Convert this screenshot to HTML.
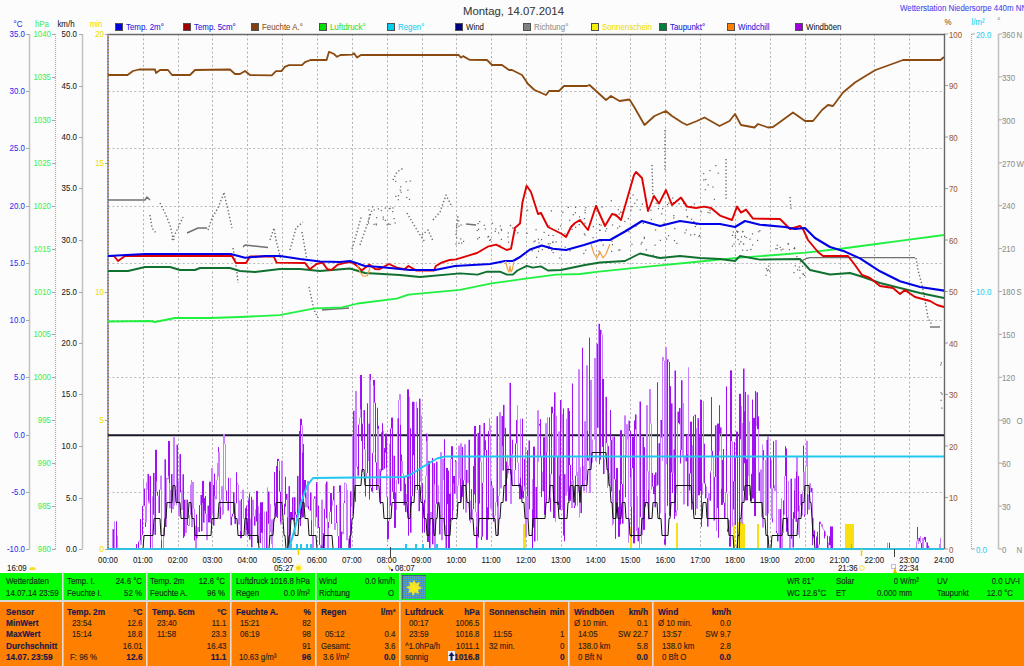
<!DOCTYPE html><html><head><meta charset="utf-8"><style>
html,body{margin:0;padding:0;background:#fcfcfc;}
body{width:1024px;height:666px;overflow:hidden;position:relative;font-family:"Liberation Sans",sans-serif;}
svg{position:absolute;left:0;top:0;}
text{font-family:"Liberation Sans",sans-serif;}
.h{stroke-width:0.08px;}
.t{stroke-width:0.15px;}
</style></head><body>
<svg width="1024" height="666" viewBox="0 0 1024 666">
<text x="513.50" y="14.6" font-size="11.35" fill="#383838" stroke="#383838" class="h" transform="matrix(1.0000,0,0,1,0.000,0)" text-anchor="middle">Montag, 14.07.2014</text>
<text x="900.00" y="11" font-size="8.53" fill="#4848f0" stroke="#4848f0" class="h" transform="matrix(0.9259,0,0,1,66.667,0)">Wetterstation Niedersorpe 440m NN</text>
<rect x="115.5" y="23.5" width="7" height="7" fill="#0000e0" stroke="#505050" stroke-width="1"/>
<text x="126.00" y="29.8" font-size="9.48" fill="#2020e0" stroke="#2020e0" class="h" transform="matrix(0.8333,0,0,1,21.000,0)">Temp. 2m°</text>
<rect x="183.5" y="23.5" width="7" height="7" fill="#a00000" stroke="#505050" stroke-width="1"/>
<text x="194.00" y="29.8" font-size="9.48" fill="#2020e0" stroke="#2020e0" class="h" transform="matrix(0.8333,0,0,1,32.333,0)">Temp. 5cm°</text>
<rect x="251.5" y="23.5" width="7" height="7" fill="#804010" stroke="#505050" stroke-width="1"/>
<text x="262.00" y="29.8" font-size="9.48" fill="#905020" stroke="#905020" class="h" transform="matrix(0.8333,0,0,1,43.667,0)">Feuchte A.°</text>
<rect x="319.5" y="23.5" width="7" height="7" fill="#00e000" stroke="#505050" stroke-width="1"/>
<text x="330.00" y="29.8" font-size="9.48" fill="#30e030" stroke="#30e030" class="h" transform="matrix(0.8333,0,0,1,55.000,0)">Luftdruck°</text>
<rect x="387.5" y="23.5" width="7" height="7" fill="#00d0f0" stroke="#505050" stroke-width="1"/>
<text x="398.00" y="29.8" font-size="9.48" fill="#20d0f0" stroke="#20d0f0" class="h" transform="matrix(0.8333,0,0,1,66.333,0)">Regen°</text>
<rect x="455.5" y="23.5" width="7" height="7" fill="#000080" stroke="#505050" stroke-width="1"/>
<text x="466.00" y="29.8" font-size="9.48" fill="#202020" stroke="#202020" class="h" transform="matrix(0.8333,0,0,1,77.667,0)">Wind</text>
<rect x="523.5" y="23.5" width="7" height="7" fill="#808080" stroke="#505050" stroke-width="1"/>
<text x="534.00" y="29.8" font-size="9.48" fill="#909090" stroke="#909090" class="h" transform="matrix(0.8333,0,0,1,89.000,0)">Richtung°</text>
<rect x="591.5" y="23.5" width="7" height="7" fill="#f0f000" stroke="#505050" stroke-width="1"/>
<text x="602.00" y="29.8" font-size="9.48" fill="#f0e000" stroke="#f0e000" class="h" transform="matrix(0.8333,0,0,1,100.333,0)">Sonnenschein</text>
<rect x="659.5" y="23.5" width="7" height="7" fill="#008040" stroke="#505050" stroke-width="1"/>
<text x="670.00" y="29.8" font-size="9.48" fill="#2020e0" stroke="#2020e0" class="h" transform="matrix(0.8333,0,0,1,111.667,0)">Taupunkt°</text>
<rect x="727.5" y="23.5" width="7" height="7" fill="#ff8000" stroke="#505050" stroke-width="1"/>
<text x="738.00" y="29.8" font-size="9.48" fill="#2020e0" stroke="#2020e0" class="h" transform="matrix(0.8333,0,0,1,123.000,0)">Windchill</text>
<rect x="795.5" y="23.5" width="7" height="7" fill="#a000e0" stroke="#505050" stroke-width="1"/>
<text x="806.00" y="29.8" font-size="9.48" fill="#202020" stroke="#202020" class="h" transform="matrix(0.8333,0,0,1,134.333,0)">Windböen</text>
<text x="18.00" y="27" font-size="9.48" fill="#3030f0" stroke="#3030f0" class="h" transform="matrix(0.8333,0,0,1,3.000,0)" text-anchor="middle">°C</text>
<text x="42.00" y="27" font-size="9.48" fill="#40f060" stroke="#40f060" class="h" transform="matrix(0.8333,0,0,1,7.000,0)" text-anchor="middle">hPa</text>
<text x="66.00" y="27" font-size="9.48" fill="#202020" stroke="#202020" class="h" transform="matrix(0.8333,0,0,1,11.000,0)" text-anchor="middle">km/h</text>
<text x="96.00" y="27" font-size="9.48" fill="#f0e000" stroke="#f0e000" class="h" transform="matrix(0.8333,0,0,1,16.000,0)" text-anchor="middle">min</text>
<text x="948.00" y="25.3" font-size="9.48" fill="#905020" stroke="#905020" class="h" transform="matrix(0.8333,0,0,1,158.000,0)" text-anchor="middle">%</text>
<text x="978.00" y="25.3" font-size="9.48" fill="#20d0f0" stroke="#20d0f0" class="h" transform="matrix(0.8333,0,0,1,163.000,0)" text-anchor="middle">l/m²</text>
<text x="999.00" y="24" font-size="9.48" fill="#909090" stroke="#909090" class="h" transform="matrix(0.8333,0,0,1,166.500,0)" text-anchor="middle">°</text>
<line x1="29.5" y1="34.0" x2="29.5" y2="549.0" stroke="#c4c4c4" stroke-width="1.6"/>
<line x1="26" y1="34.5" x2="29.5" y2="34.5" stroke="#a8a8a8" stroke-width="1"/>
<text x="25.00" y="37.3" font-size="9.48" fill="#3030f0" stroke="#3030f0" class="h" transform="matrix(0.8333,0,0,1,4.167,0)" text-anchor="end">35.0</text>
<line x1="26" y1="91.5" x2="29.5" y2="91.5" stroke="#a8a8a8" stroke-width="1"/>
<text x="25.00" y="94.3" font-size="9.48" fill="#3030f0" stroke="#3030f0" class="h" transform="matrix(0.8333,0,0,1,4.167,0)" text-anchor="end">30.0</text>
<line x1="26" y1="148.5" x2="29.5" y2="148.5" stroke="#a8a8a8" stroke-width="1"/>
<text x="25.00" y="151.3" font-size="9.48" fill="#3030f0" stroke="#3030f0" class="h" transform="matrix(0.8333,0,0,1,4.167,0)" text-anchor="end">25.0</text>
<line x1="26" y1="206.5" x2="29.5" y2="206.5" stroke="#a8a8a8" stroke-width="1"/>
<text x="25.00" y="209.3" font-size="9.48" fill="#3030f0" stroke="#3030f0" class="h" transform="matrix(0.8333,0,0,1,4.167,0)" text-anchor="end">20.0</text>
<line x1="26" y1="263.5" x2="29.5" y2="263.5" stroke="#a8a8a8" stroke-width="1"/>
<text x="25.00" y="266.3" font-size="9.48" fill="#3030f0" stroke="#3030f0" class="h" transform="matrix(0.8333,0,0,1,4.167,0)" text-anchor="end">15.0</text>
<line x1="26" y1="320.5" x2="29.5" y2="320.5" stroke="#a8a8a8" stroke-width="1"/>
<text x="25.00" y="323.3" font-size="9.48" fill="#3030f0" stroke="#3030f0" class="h" transform="matrix(0.8333,0,0,1,4.167,0)" text-anchor="end">10.0</text>
<line x1="26" y1="377.5" x2="29.5" y2="377.5" stroke="#a8a8a8" stroke-width="1"/>
<text x="25.00" y="380.3" font-size="9.48" fill="#3030f0" stroke="#3030f0" class="h" transform="matrix(0.8333,0,0,1,4.167,0)" text-anchor="end">5.0</text>
<line x1="26" y1="435.5" x2="29.5" y2="435.5" stroke="#a8a8a8" stroke-width="1"/>
<text x="25.00" y="438.3" font-size="9.48" fill="#3030f0" stroke="#3030f0" class="h" transform="matrix(0.8333,0,0,1,4.167,0)" text-anchor="end">0.0</text>
<line x1="26" y1="492.5" x2="29.5" y2="492.5" stroke="#a8a8a8" stroke-width="1"/>
<text x="25.00" y="495.3" font-size="9.48" fill="#3030f0" stroke="#3030f0" class="h" transform="matrix(0.8333,0,0,1,4.167,0)" text-anchor="end">-5.0</text>
<line x1="26" y1="549.5" x2="29.5" y2="549.5" stroke="#a8a8a8" stroke-width="1"/>
<text x="25.00" y="552.3" font-size="9.48" fill="#3030f0" stroke="#3030f0" class="h" transform="matrix(0.8333,0,0,1,4.167,0)" text-anchor="end">-10.0</text>
<line x1="55.5" y1="34.0" x2="55.5" y2="549.0" stroke="#c0a090" stroke-width="1.2" stroke-dasharray="1 1"/>
<line x1="52" y1="34.5" x2="55.5" y2="34.5" stroke="#a8a8a8" stroke-width="1"/>
<text x="51.00" y="37.3" font-size="9.48" fill="#40f060" stroke="#40f060" class="h" transform="matrix(0.8333,0,0,1,8.500,0)" text-anchor="end">1040</text>
<line x1="52" y1="77.5" x2="55.5" y2="77.5" stroke="#a8a8a8" stroke-width="1"/>
<text x="51.00" y="80.3" font-size="9.48" fill="#40f060" stroke="#40f060" class="h" transform="matrix(0.8333,0,0,1,8.500,0)" text-anchor="end">1035</text>
<line x1="52" y1="120.5" x2="55.5" y2="120.5" stroke="#a8a8a8" stroke-width="1"/>
<text x="51.00" y="123.3" font-size="9.48" fill="#40f060" stroke="#40f060" class="h" transform="matrix(0.8333,0,0,1,8.500,0)" text-anchor="end">1030</text>
<line x1="52" y1="163.5" x2="55.5" y2="163.5" stroke="#a8a8a8" stroke-width="1"/>
<text x="51.00" y="166.3" font-size="9.48" fill="#40f060" stroke="#40f060" class="h" transform="matrix(0.8333,0,0,1,8.500,0)" text-anchor="end">1025</text>
<line x1="52" y1="206.5" x2="55.5" y2="206.5" stroke="#a8a8a8" stroke-width="1"/>
<text x="51.00" y="209.3" font-size="9.48" fill="#40f060" stroke="#40f060" class="h" transform="matrix(0.8333,0,0,1,8.500,0)" text-anchor="end">1020</text>
<line x1="52" y1="249.5" x2="55.5" y2="249.5" stroke="#a8a8a8" stroke-width="1"/>
<text x="51.00" y="252.3" font-size="9.48" fill="#40f060" stroke="#40f060" class="h" transform="matrix(0.8333,0,0,1,8.500,0)" text-anchor="end">1015</text>
<line x1="52" y1="292.5" x2="55.5" y2="292.5" stroke="#a8a8a8" stroke-width="1"/>
<text x="51.00" y="295.3" font-size="9.48" fill="#40f060" stroke="#40f060" class="h" transform="matrix(0.8333,0,0,1,8.500,0)" text-anchor="end">1010</text>
<line x1="52" y1="334.5" x2="55.5" y2="334.5" stroke="#a8a8a8" stroke-width="1"/>
<text x="51.00" y="337.3" font-size="9.48" fill="#40f060" stroke="#40f060" class="h" transform="matrix(0.8333,0,0,1,8.500,0)" text-anchor="end">1005</text>
<line x1="52" y1="377.5" x2="55.5" y2="377.5" stroke="#a8a8a8" stroke-width="1"/>
<text x="51.00" y="380.3" font-size="9.48" fill="#40f060" stroke="#40f060" class="h" transform="matrix(0.8333,0,0,1,8.500,0)" text-anchor="end">1000</text>
<line x1="52" y1="420.5" x2="55.5" y2="420.5" stroke="#a8a8a8" stroke-width="1"/>
<text x="51.00" y="423.3" font-size="9.48" fill="#40f060" stroke="#40f060" class="h" transform="matrix(0.8333,0,0,1,8.500,0)" text-anchor="end">995</text>
<line x1="52" y1="463.5" x2="55.5" y2="463.5" stroke="#a8a8a8" stroke-width="1"/>
<text x="51.00" y="466.3" font-size="9.48" fill="#40f060" stroke="#40f060" class="h" transform="matrix(0.8333,0,0,1,8.500,0)" text-anchor="end">990</text>
<line x1="52" y1="506.5" x2="55.5" y2="506.5" stroke="#a8a8a8" stroke-width="1"/>
<text x="51.00" y="509.3" font-size="9.48" fill="#40f060" stroke="#40f060" class="h" transform="matrix(0.8333,0,0,1,8.500,0)" text-anchor="end">985</text>
<line x1="52" y1="549.5" x2="55.5" y2="549.5" stroke="#a8a8a8" stroke-width="1"/>
<text x="51.00" y="552.3" font-size="9.48" fill="#40f060" stroke="#40f060" class="h" transform="matrix(0.8333,0,0,1,8.500,0)" text-anchor="end">980</text>
<line x1="82.5" y1="34.0" x2="82.5" y2="549.0" stroke="#c4c4c4" stroke-width="1.6"/>
<line x1="79" y1="34.5" x2="82.5" y2="34.5" stroke="#a8a8a8" stroke-width="1"/>
<text x="77.00" y="37.3" font-size="9.48" fill="#202020" stroke="#202020" class="h" transform="matrix(0.8333,0,0,1,12.833,0)" text-anchor="end">50.0</text>
<line x1="79" y1="86.5" x2="82.5" y2="86.5" stroke="#a8a8a8" stroke-width="1"/>
<text x="77.00" y="89.3" font-size="9.48" fill="#202020" stroke="#202020" class="h" transform="matrix(0.8333,0,0,1,12.833,0)" text-anchor="end">45.0</text>
<line x1="79" y1="137.5" x2="82.5" y2="137.5" stroke="#a8a8a8" stroke-width="1"/>
<text x="77.00" y="140.3" font-size="9.48" fill="#202020" stroke="#202020" class="h" transform="matrix(0.8333,0,0,1,12.833,0)" text-anchor="end">40.0</text>
<line x1="79" y1="188.5" x2="82.5" y2="188.5" stroke="#a8a8a8" stroke-width="1"/>
<text x="77.00" y="191.3" font-size="9.48" fill="#202020" stroke="#202020" class="h" transform="matrix(0.8333,0,0,1,12.833,0)" text-anchor="end">35.0</text>
<line x1="79" y1="240.5" x2="82.5" y2="240.5" stroke="#a8a8a8" stroke-width="1"/>
<text x="77.00" y="243.3" font-size="9.48" fill="#202020" stroke="#202020" class="h" transform="matrix(0.8333,0,0,1,12.833,0)" text-anchor="end">30.0</text>
<line x1="79" y1="292.5" x2="82.5" y2="292.5" stroke="#a8a8a8" stroke-width="1"/>
<text x="77.00" y="295.3" font-size="9.48" fill="#202020" stroke="#202020" class="h" transform="matrix(0.8333,0,0,1,12.833,0)" text-anchor="end">25.0</text>
<line x1="79" y1="343.5" x2="82.5" y2="343.5" stroke="#a8a8a8" stroke-width="1"/>
<text x="77.00" y="346.3" font-size="9.48" fill="#202020" stroke="#202020" class="h" transform="matrix(0.8333,0,0,1,12.833,0)" text-anchor="end">20.0</text>
<line x1="79" y1="394.5" x2="82.5" y2="394.5" stroke="#a8a8a8" stroke-width="1"/>
<text x="77.00" y="397.3" font-size="9.48" fill="#202020" stroke="#202020" class="h" transform="matrix(0.8333,0,0,1,12.833,0)" text-anchor="end">15.0</text>
<line x1="79" y1="446.5" x2="82.5" y2="446.5" stroke="#a8a8a8" stroke-width="1"/>
<text x="77.00" y="449.3" font-size="9.48" fill="#202020" stroke="#202020" class="h" transform="matrix(0.8333,0,0,1,12.833,0)" text-anchor="end">10.0</text>
<line x1="79" y1="498.5" x2="82.5" y2="498.5" stroke="#a8a8a8" stroke-width="1"/>
<text x="77.00" y="501.3" font-size="9.48" fill="#202020" stroke="#202020" class="h" transform="matrix(0.8333,0,0,1,12.833,0)" text-anchor="end">5.0</text>
<line x1="79" y1="549.5" x2="82.5" y2="549.5" stroke="#a8a8a8" stroke-width="1"/>
<text x="77.00" y="552.3" font-size="9.48" fill="#202020" stroke="#202020" class="h" transform="matrix(0.8333,0,0,1,12.833,0)" text-anchor="end">0.0</text>
<line x1="105" y1="34.5" x2="108.5" y2="34.5" stroke="#a8a8a8" stroke-width="1"/>
<text x="104.00" y="37.3" font-size="9.48" fill="#f0e000" stroke="#f0e000" class="h" transform="matrix(0.8333,0,0,1,17.333,0)" text-anchor="end">20</text>
<line x1="105" y1="163.5" x2="108.5" y2="163.5" stroke="#a8a8a8" stroke-width="1"/>
<text x="104.00" y="166.3" font-size="9.48" fill="#f0e000" stroke="#f0e000" class="h" transform="matrix(0.8333,0,0,1,17.333,0)" text-anchor="end">15</text>
<line x1="105" y1="292.5" x2="108.5" y2="292.5" stroke="#a8a8a8" stroke-width="1"/>
<text x="104.00" y="295.3" font-size="9.48" fill="#f0e000" stroke="#f0e000" class="h" transform="matrix(0.8333,0,0,1,17.333,0)" text-anchor="end">10</text>
<line x1="105" y1="420.5" x2="108.5" y2="420.5" stroke="#a8a8a8" stroke-width="1"/>
<text x="104.00" y="423.3" font-size="9.48" fill="#f0e000" stroke="#f0e000" class="h" transform="matrix(0.8333,0,0,1,17.333,0)" text-anchor="end">5</text>
<line x1="105" y1="549.5" x2="108.5" y2="549.5" stroke="#a8a8a8" stroke-width="1"/>
<text x="104.00" y="552.3" font-size="9.48" fill="#f0e000" stroke="#f0e000" class="h" transform="matrix(0.8333,0,0,1,17.333,0)" text-anchor="end">0</text>
<line x1="971.5" y1="34.0" x2="971.5" y2="549.0" stroke="#c0a090" stroke-width="1.2" stroke-dasharray="1 1"/>
<line x1="998.5" y1="34.0" x2="998.5" y2="549.0" stroke="#c4c4c4" stroke-width="1.6"/>
<line x1="944" y1="34.0" x2="948" y2="34.0" stroke="#a0a0a0" stroke-width="1"/>
<text x="949.00" y="37.8" font-size="9.48" fill="#a06030" stroke="#a06030" class="h" transform="matrix(0.8333,0,0,1,158.167,0)">100</text>
<line x1="944" y1="85.5" x2="948" y2="85.5" stroke="#a0a0a0" stroke-width="1"/>
<text x="949.00" y="89.3" font-size="9.48" fill="#a06030" stroke="#a06030" class="h" transform="matrix(0.8333,0,0,1,158.167,0)">90</text>
<line x1="944" y1="137.0" x2="948" y2="137.0" stroke="#a0a0a0" stroke-width="1"/>
<text x="949.00" y="140.8" font-size="9.48" fill="#a06030" stroke="#a06030" class="h" transform="matrix(0.8333,0,0,1,158.167,0)">80</text>
<line x1="944" y1="188.5" x2="948" y2="188.5" stroke="#a0a0a0" stroke-width="1"/>
<text x="949.00" y="192.3" font-size="9.48" fill="#a06030" stroke="#a06030" class="h" transform="matrix(0.8333,0,0,1,158.167,0)">70</text>
<line x1="944" y1="240.0" x2="948" y2="240.0" stroke="#a0a0a0" stroke-width="1"/>
<text x="949.00" y="243.8" font-size="9.48" fill="#a06030" stroke="#a06030" class="h" transform="matrix(0.8333,0,0,1,158.167,0)">60</text>
<line x1="944" y1="291.5" x2="948" y2="291.5" stroke="#a0a0a0" stroke-width="1"/>
<text x="949.00" y="295.3" font-size="9.48" fill="#a06030" stroke="#a06030" class="h" transform="matrix(0.8333,0,0,1,158.167,0)">50</text>
<line x1="944" y1="343.0" x2="948" y2="343.0" stroke="#a0a0a0" stroke-width="1"/>
<text x="949.00" y="346.8" font-size="9.48" fill="#a06030" stroke="#a06030" class="h" transform="matrix(0.8333,0,0,1,158.167,0)">40</text>
<line x1="944" y1="394.5" x2="948" y2="394.5" stroke="#a0a0a0" stroke-width="1"/>
<text x="949.00" y="398.3" font-size="9.48" fill="#a06030" stroke="#a06030" class="h" transform="matrix(0.8333,0,0,1,158.167,0)">30</text>
<line x1="944" y1="446.0" x2="948" y2="446.0" stroke="#a0a0a0" stroke-width="1"/>
<text x="949.00" y="449.8" font-size="9.48" fill="#a06030" stroke="#a06030" class="h" transform="matrix(0.8333,0,0,1,158.167,0)">20</text>
<line x1="944" y1="497.5" x2="948" y2="497.5" stroke="#a0a0a0" stroke-width="1"/>
<text x="949.00" y="501.3" font-size="9.48" fill="#a06030" stroke="#a06030" class="h" transform="matrix(0.8333,0,0,1,158.167,0)">10</text>
<line x1="944" y1="549.0" x2="948" y2="549.0" stroke="#a0a0a0" stroke-width="1"/>
<text x="949.00" y="552.8" font-size="9.48" fill="#a06030" stroke="#a06030" class="h" transform="matrix(0.8333,0,0,1,158.167,0)">0</text>
<line x1="971.5" y1="34.0" x2="975" y2="34.0" stroke="#a8a8a8" stroke-width="1"/>
<text x="976.00" y="37.8" font-size="9.48" fill="#30d0f0" stroke="#30d0f0" class="h" transform="matrix(0.8333,0,0,1,162.667,0)">20.0</text>
<line x1="971.5" y1="291.5" x2="975" y2="291.5" stroke="#a8a8a8" stroke-width="1"/>
<text x="976.00" y="295.3" font-size="9.48" fill="#30d0f0" stroke="#30d0f0" class="h" transform="matrix(0.8333,0,0,1,162.667,0)">10.0</text>
<line x1="971.5" y1="549.0" x2="975" y2="549.0" stroke="#a8a8a8" stroke-width="1"/>
<text x="976.00" y="552.8" font-size="9.48" fill="#30d0f0" stroke="#30d0f0" class="h" transform="matrix(0.8333,0,0,1,162.667,0)">0.0</text>
<line x1="998.5" y1="34.0" x2="1002" y2="34.0" stroke="#a8a8a8" stroke-width="1"/>
<text x="1002.00" y="37.8" font-size="9.48" fill="#909090" stroke="#909090" class="h" transform="matrix(0.8333,0,0,1,167.000,0)">360</text>
<text x="1016.50" y="37.8" font-size="9.48" fill="#909090" stroke="#909090" class="h" transform="matrix(0.8333,0,0,1,169.417,0)">N</text>
<line x1="998.5" y1="76.9" x2="1002" y2="76.9" stroke="#a8a8a8" stroke-width="1"/>
<text x="1002.00" y="80.7" font-size="9.48" fill="#909090" stroke="#909090" class="h" transform="matrix(0.8333,0,0,1,167.000,0)">330</text>
<line x1="998.5" y1="119.8" x2="1002" y2="119.8" stroke="#a8a8a8" stroke-width="1"/>
<text x="1002.00" y="123.6" font-size="9.48" fill="#909090" stroke="#909090" class="h" transform="matrix(0.8333,0,0,1,167.000,0)">300</text>
<line x1="998.5" y1="162.8" x2="1002" y2="162.8" stroke="#a8a8a8" stroke-width="1"/>
<text x="1002.00" y="166.6" font-size="9.48" fill="#909090" stroke="#909090" class="h" transform="matrix(0.8333,0,0,1,167.000,0)">270</text>
<text x="1016.50" y="166.6" font-size="9.48" fill="#909090" stroke="#909090" class="h" transform="matrix(0.8333,0,0,1,169.417,0)">W</text>
<line x1="998.5" y1="205.7" x2="1002" y2="205.7" stroke="#a8a8a8" stroke-width="1"/>
<text x="1002.00" y="209.5" font-size="9.48" fill="#909090" stroke="#909090" class="h" transform="matrix(0.8333,0,0,1,167.000,0)">240</text>
<line x1="998.5" y1="248.6" x2="1002" y2="248.6" stroke="#a8a8a8" stroke-width="1"/>
<text x="1002.00" y="252.4" font-size="9.48" fill="#909090" stroke="#909090" class="h" transform="matrix(0.8333,0,0,1,167.000,0)">210</text>
<line x1="998.5" y1="291.5" x2="1002" y2="291.5" stroke="#a8a8a8" stroke-width="1"/>
<text x="1002.00" y="295.3" font-size="9.48" fill="#909090" stroke="#909090" class="h" transform="matrix(0.8333,0,0,1,167.000,0)">180</text>
<text x="1016.50" y="295.3" font-size="9.48" fill="#909090" stroke="#909090" class="h" transform="matrix(0.8333,0,0,1,169.417,0)">S</text>
<line x1="998.5" y1="334.4" x2="1002" y2="334.4" stroke="#a8a8a8" stroke-width="1"/>
<text x="1002.00" y="338.2" font-size="9.48" fill="#909090" stroke="#909090" class="h" transform="matrix(0.8333,0,0,1,167.000,0)">150</text>
<line x1="998.5" y1="377.3" x2="1002" y2="377.3" stroke="#a8a8a8" stroke-width="1"/>
<text x="1002.00" y="381.1" font-size="9.48" fill="#909090" stroke="#909090" class="h" transform="matrix(0.8333,0,0,1,167.000,0)">120</text>
<line x1="998.5" y1="420.2" x2="1002" y2="420.2" stroke="#a8a8a8" stroke-width="1"/>
<text x="1002.00" y="424.1" font-size="9.48" fill="#909090" stroke="#909090" class="h" transform="matrix(0.8333,0,0,1,167.000,0)">90</text>
<text x="1016.50" y="424.1" font-size="9.48" fill="#909090" stroke="#909090" class="h" transform="matrix(0.8333,0,0,1,169.417,0)">O</text>
<line x1="998.5" y1="463.2" x2="1002" y2="463.2" stroke="#a8a8a8" stroke-width="1"/>
<text x="1002.00" y="467.0" font-size="9.48" fill="#909090" stroke="#909090" class="h" transform="matrix(0.8333,0,0,1,167.000,0)">60</text>
<line x1="998.5" y1="506.1" x2="1002" y2="506.1" stroke="#a8a8a8" stroke-width="1"/>
<text x="1002.00" y="509.9" font-size="9.48" fill="#909090" stroke="#909090" class="h" transform="matrix(0.8333,0,0,1,167.000,0)">30</text>
<line x1="998.5" y1="549.0" x2="1002" y2="549.0" stroke="#a8a8a8" stroke-width="1"/>
<text x="1002.00" y="552.8" font-size="9.48" fill="#909090" stroke="#909090" class="h" transform="matrix(0.8333,0,0,1,167.000,0)">0</text>
<text x="1016.50" y="552.8" font-size="9.48" fill="#909090" stroke="#909090" class="h" transform="matrix(0.8333,0,0,1,169.417,0)">N</text>
<line x1="143.5" y1="34.0" x2="143.5" y2="549.0" stroke="#b0b0b0" stroke-width="1" stroke-dasharray="2 2.4"/>
<line x1="178.5" y1="34.0" x2="178.5" y2="549.0" stroke="#b0b0b0" stroke-width="1" stroke-dasharray="2 2.4"/>
<line x1="212.5" y1="34.0" x2="212.5" y2="549.0" stroke="#b0b0b0" stroke-width="1" stroke-dasharray="2 2.4"/>
<line x1="247.5" y1="34.0" x2="247.5" y2="549.0" stroke="#b0b0b0" stroke-width="1" stroke-dasharray="2 2.4"/>
<line x1="282.5" y1="34.0" x2="282.5" y2="549.0" stroke="#b0b0b0" stroke-width="1" stroke-dasharray="2 2.4"/>
<line x1="317.5" y1="34.0" x2="317.5" y2="549.0" stroke="#b0b0b0" stroke-width="1" stroke-dasharray="2 2.4"/>
<line x1="352.5" y1="34.0" x2="352.5" y2="549.0" stroke="#b0b0b0" stroke-width="1" stroke-dasharray="2 2.4"/>
<line x1="387.5" y1="34.0" x2="387.5" y2="549.0" stroke="#b0b0b0" stroke-width="1" stroke-dasharray="2 2.4"/>
<line x1="422.5" y1="34.0" x2="422.5" y2="549.0" stroke="#b0b0b0" stroke-width="1" stroke-dasharray="2 2.4"/>
<line x1="456.5" y1="34.0" x2="456.5" y2="549.0" stroke="#b0b0b0" stroke-width="1" stroke-dasharray="2 2.4"/>
<line x1="491.5" y1="34.0" x2="491.5" y2="549.0" stroke="#b0b0b0" stroke-width="1" stroke-dasharray="2 2.4"/>
<line x1="526.5" y1="34.0" x2="526.5" y2="549.0" stroke="#b0b0b0" stroke-width="1" stroke-dasharray="2 2.4"/>
<line x1="561.5" y1="34.0" x2="561.5" y2="549.0" stroke="#b0b0b0" stroke-width="1" stroke-dasharray="2 2.4"/>
<line x1="596.5" y1="34.0" x2="596.5" y2="549.0" stroke="#b0b0b0" stroke-width="1" stroke-dasharray="2 2.4"/>
<line x1="630.5" y1="34.0" x2="630.5" y2="549.0" stroke="#b0b0b0" stroke-width="1" stroke-dasharray="2 2.4"/>
<line x1="665.5" y1="34.0" x2="665.5" y2="549.0" stroke="#b0b0b0" stroke-width="1" stroke-dasharray="2 2.4"/>
<line x1="700.5" y1="34.0" x2="700.5" y2="549.0" stroke="#b0b0b0" stroke-width="1" stroke-dasharray="2 2.4"/>
<line x1="735.5" y1="34.0" x2="735.5" y2="549.0" stroke="#b0b0b0" stroke-width="1" stroke-dasharray="2 2.4"/>
<line x1="770.5" y1="34.0" x2="770.5" y2="549.0" stroke="#b0b0b0" stroke-width="1" stroke-dasharray="2 2.4"/>
<line x1="805.5" y1="34.0" x2="805.5" y2="549.0" stroke="#b0b0b0" stroke-width="1" stroke-dasharray="2 2.4"/>
<line x1="840.5" y1="34.0" x2="840.5" y2="549.0" stroke="#b0b0b0" stroke-width="1" stroke-dasharray="2 2.4"/>
<line x1="874.5" y1="34.0" x2="874.5" y2="549.0" stroke="#b0b0b0" stroke-width="1" stroke-dasharray="2 2.4"/>
<line x1="909.5" y1="34.0" x2="909.5" y2="549.0" stroke="#b0b0b0" stroke-width="1" stroke-dasharray="2 2.4"/>
<line x1="108.0" y1="91.5" x2="944.0" y2="91.5" stroke="#bababa" stroke-width="1" stroke-dasharray="2 2.4"/>
<line x1="108.0" y1="148.5" x2="944.0" y2="148.5" stroke="#bababa" stroke-width="1" stroke-dasharray="2 2.4"/>
<line x1="108.0" y1="206.5" x2="944.0" y2="206.5" stroke="#bababa" stroke-width="1" stroke-dasharray="2 2.4"/>
<line x1="108.0" y1="263.5" x2="944.0" y2="263.5" stroke="#bababa" stroke-width="1" stroke-dasharray="2 2.4"/>
<line x1="108.0" y1="320.5" x2="944.0" y2="320.5" stroke="#bababa" stroke-width="1" stroke-dasharray="2 2.4"/>
<line x1="108.0" y1="377.5" x2="944.0" y2="377.5" stroke="#bababa" stroke-width="1" stroke-dasharray="2 2.4"/>
<line x1="108.0" y1="435.5" x2="944.0" y2="435.5" stroke="#bababa" stroke-width="1" stroke-dasharray="2 2.4"/>
<line x1="108.0" y1="492.5" x2="944.0" y2="492.5" stroke="#bababa" stroke-width="1" stroke-dasharray="2 2.4"/>
<line x1="108.0" y1="34.5" x2="944.7" y2="34.5" stroke="#686868" stroke-width="1.4"/>
<line x1="944.5" y1="34.0" x2="944.5" y2="549.0" stroke="#686868" stroke-width="1.4"/>
<line x1="108.0" y1="34.0" x2="108.0" y2="549.0" stroke="#9c9cd8" stroke-width="2"/>
<line x1="108.0" y1="34.0" x2="108.0" y2="549.0" stroke="#b07840" stroke-width="2" stroke-dasharray="1 2"/>
<line x1="108.0" y1="34.0" x2="108.0" y2="549.0" stroke="#50b080" stroke-width="1" stroke-dasharray="1 5" stroke-dashoffset="2"/>
<text x="108.00" y="563" font-size="9.48" fill="#202020" stroke="#202020" class="h" transform="matrix(0.8333,0,0,1,18.000,0)" text-anchor="middle">00:00</text>
<text x="142.80" y="563" font-size="9.48" fill="#202020" stroke="#202020" class="h" transform="matrix(0.8333,0,0,1,23.800,0)" text-anchor="middle">01:00</text>
<text x="177.70" y="563" font-size="9.48" fill="#202020" stroke="#202020" class="h" transform="matrix(0.8333,0,0,1,29.617,0)" text-anchor="middle">02:00</text>
<text x="212.50" y="563" font-size="9.48" fill="#202020" stroke="#202020" class="h" transform="matrix(0.8333,0,0,1,35.417,0)" text-anchor="middle">03:00</text>
<text x="247.30" y="563" font-size="9.48" fill="#202020" stroke="#202020" class="h" transform="matrix(0.8333,0,0,1,41.217,0)" text-anchor="middle">04:00</text>
<text x="282.20" y="563" font-size="9.48" fill="#202020" stroke="#202020" class="h" transform="matrix(0.8333,0,0,1,47.033,0)" text-anchor="middle">05:00</text>
<text x="317.00" y="563" font-size="9.48" fill="#202020" stroke="#202020" class="h" transform="matrix(0.8333,0,0,1,52.833,0)" text-anchor="middle">06:00</text>
<text x="351.80" y="563" font-size="9.48" fill="#202020" stroke="#202020" class="h" transform="matrix(0.8333,0,0,1,58.633,0)" text-anchor="middle">07:00</text>
<text x="386.70" y="563" font-size="9.48" fill="#202020" stroke="#202020" class="h" transform="matrix(0.8333,0,0,1,64.450,0)" text-anchor="middle">08:00</text>
<text x="421.50" y="563" font-size="9.48" fill="#202020" stroke="#202020" class="h" transform="matrix(0.8333,0,0,1,70.250,0)" text-anchor="middle">09:00</text>
<text x="456.30" y="563" font-size="9.48" fill="#202020" stroke="#202020" class="h" transform="matrix(0.8333,0,0,1,76.050,0)" text-anchor="middle">10:00</text>
<text x="491.20" y="563" font-size="9.48" fill="#202020" stroke="#202020" class="h" transform="matrix(0.8333,0,0,1,81.867,0)" text-anchor="middle">11:00</text>
<text x="526.00" y="563" font-size="9.48" fill="#202020" stroke="#202020" class="h" transform="matrix(0.8333,0,0,1,87.667,0)" text-anchor="middle">12:00</text>
<text x="560.80" y="563" font-size="9.48" fill="#202020" stroke="#202020" class="h" transform="matrix(0.8333,0,0,1,93.467,0)" text-anchor="middle">13:00</text>
<text x="595.70" y="563" font-size="9.48" fill="#202020" stroke="#202020" class="h" transform="matrix(0.8333,0,0,1,99.283,0)" text-anchor="middle">14:00</text>
<text x="630.50" y="563" font-size="9.48" fill="#202020" stroke="#202020" class="h" transform="matrix(0.8333,0,0,1,105.083,0)" text-anchor="middle">15:00</text>
<text x="665.30" y="563" font-size="9.48" fill="#202020" stroke="#202020" class="h" transform="matrix(0.8333,0,0,1,110.883,0)" text-anchor="middle">16:00</text>
<text x="700.20" y="563" font-size="9.48" fill="#202020" stroke="#202020" class="h" transform="matrix(0.8333,0,0,1,116.700,0)" text-anchor="middle">17:00</text>
<text x="735.00" y="563" font-size="9.48" fill="#202020" stroke="#202020" class="h" transform="matrix(0.8333,0,0,1,122.500,0)" text-anchor="middle">18:00</text>
<text x="769.80" y="563" font-size="9.48" fill="#202020" stroke="#202020" class="h" transform="matrix(0.8333,0,0,1,128.300,0)" text-anchor="middle">19:00</text>
<text x="804.70" y="563" font-size="9.48" fill="#202020" stroke="#202020" class="h" transform="matrix(0.8333,0,0,1,134.117,0)" text-anchor="middle">20:00</text>
<text x="839.50" y="563" font-size="9.48" fill="#202020" stroke="#202020" class="h" transform="matrix(0.8333,0,0,1,139.917,0)" text-anchor="middle">21:00</text>
<text x="874.30" y="563" font-size="9.48" fill="#202020" stroke="#202020" class="h" transform="matrix(0.8333,0,0,1,145.717,0)" text-anchor="middle">22:00</text>
<text x="909.20" y="563" font-size="9.48" fill="#202020" stroke="#202020" class="h" transform="matrix(0.8333,0,0,1,151.533,0)" text-anchor="middle">23:00</text>
<text x="944.00" y="563" font-size="9.48" fill="#202020" stroke="#202020" class="h" transform="matrix(0.8333,0,0,1,157.333,0)" text-anchor="middle">24:00</text>
<polyline points="150.0,215.0 152.0,228.0 156.0,233.0" fill="none" stroke="#686868" stroke-width="1.4" stroke-linejoin="round" stroke-dasharray="1.3 2.2" stroke-linejoin="miter"/>
<polyline points="160.0,203.0 165.0,213.0 170.0,225.0 173.0,238.0 175.0,242.0" fill="none" stroke="#686868" stroke-width="1.4" stroke-linejoin="round" stroke-dasharray="1.3 2.2" stroke-linejoin="miter"/>
<polyline points="172.0,240.0 178.0,228.0 183.0,217.0" fill="none" stroke="#686868" stroke-width="1.4" stroke-linejoin="round" stroke-dasharray="1.3 2.2" stroke-linejoin="miter"/>
<polyline points="208.0,230.0 212.0,218.0 218.0,208.0 224.0,193.0" fill="none" stroke="#686868" stroke-width="1.4" stroke-linejoin="round" stroke-dasharray="1.3 2.2" stroke-linejoin="miter"/>
<polyline points="224.0,193.0 228.0,210.0 232.0,228.0" fill="none" stroke="#686868" stroke-width="1.4" stroke-linejoin="round" stroke-dasharray="1.3 2.2" stroke-linejoin="miter"/>
<polyline points="233.0,248.0 236.0,265.0 238.0,283.0" fill="none" stroke="#686868" stroke-width="1.4" stroke-linejoin="round" stroke-dasharray="1.3 2.2" stroke-linejoin="miter"/>
<polyline points="270.0,240.0 274.0,228.0 276.0,240.0 281.0,260.0" fill="none" stroke="#686868" stroke-width="1.4" stroke-linejoin="round" stroke-dasharray="1.3 2.2" stroke-linejoin="miter"/>
<polyline points="290.0,250.0 296.0,228.0 303.0,222.0" fill="none" stroke="#686868" stroke-width="1.4" stroke-linejoin="round" stroke-dasharray="1.3 2.2" stroke-linejoin="miter"/>
<polyline points="302.0,232.0 307.0,260.0" fill="none" stroke="#686868" stroke-width="1.4" stroke-linejoin="round" stroke-dasharray="1.3 2.2" stroke-linejoin="miter"/>
<polyline points="309.0,287.0 314.0,310.0 318.0,318.0" fill="none" stroke="#686868" stroke-width="1.4" stroke-linejoin="round" stroke-dasharray="1.3 2.2" stroke-linejoin="miter"/>
<polyline points="352.0,249.0 357.0,232.0 361.5,216.0" fill="none" stroke="#686868" stroke-width="1.4" stroke-linejoin="round" stroke-dasharray="1.3 2.2" stroke-linejoin="miter"/>
<polyline points="360.0,245.0 366.0,228.0 372.0,210.0" fill="none" stroke="#686868" stroke-width="1.4" stroke-linejoin="round" stroke-dasharray="1.3 2.2" stroke-linejoin="miter"/>
<polyline points="393.0,180.0 397.0,172.0 403.6,168.0" fill="none" stroke="#686868" stroke-width="1.4" stroke-linejoin="round" stroke-dasharray="1.3 2.2" stroke-linejoin="miter"/>
<polyline points="407.0,213.0 414.0,225.0 420.0,235.0 425.0,242.0" fill="none" stroke="#686868" stroke-width="1.4" stroke-linejoin="round" stroke-dasharray="1.3 2.2" stroke-linejoin="miter"/>
<polyline points="422.0,235.0 428.0,230.0 433.0,241.0" fill="none" stroke="#686868" stroke-width="1.4" stroke-linejoin="round" stroke-dasharray="1.3 2.2" stroke-linejoin="miter"/>
<polyline points="433.0,220.0 440.0,212.0 446.0,195.0 452.0,207.0" fill="none" stroke="#686868" stroke-width="1.4" stroke-linejoin="round" stroke-dasharray="1.3 2.2" stroke-linejoin="miter"/>
<polyline points="456.0,235.0 458.0,215.0" fill="none" stroke="#686868" stroke-width="1.4" stroke-linejoin="round" stroke-dasharray="1.3 2.2" stroke-linejoin="miter"/>
<polyline points="510.0,225.0 520.0,235.0" fill="none" stroke="#686868" stroke-width="1.4" stroke-linejoin="round" stroke-dasharray="1.3 2.2" stroke-linejoin="miter"/>
<polyline points="726.0,159.0 726.0,200.0" fill="none" stroke="#686868" stroke-width="1.4" stroke-linejoin="round" stroke-dasharray="1.3 2.2" stroke-linejoin="miter"/>
<polyline points="665.0,130.0 665.0,171.0" fill="none" stroke="#686868" stroke-width="1.4" stroke-linejoin="round" stroke-dasharray="1.3 2.2" stroke-linejoin="miter"/>
<polyline points="652.0,165.0 653.0,200.0" fill="none" stroke="#686868" stroke-width="1.4" stroke-linejoin="round" stroke-dasharray="1.3 2.2" stroke-linejoin="miter"/>
<polyline points="790.0,197.0 791.0,210.0" fill="none" stroke="#686868" stroke-width="1.4" stroke-linejoin="round" stroke-dasharray="1.3 2.2" stroke-linejoin="miter"/>
<polyline points="732.0,235.0 745.0,245.0" fill="none" stroke="#686868" stroke-width="1.4" stroke-linejoin="round" stroke-dasharray="1.3 2.2" stroke-linejoin="miter"/>
<polyline points="916.0,258.0 918.0,270.0 922.0,285.0 925.0,300.0 928.0,318.0 932.0,325.0" fill="none" stroke="#686868" stroke-width="1.4" stroke-linejoin="round" stroke-dasharray="1.3 2.2" stroke-linejoin="miter"/>
<polyline points="108.0,200.0 145.0,200.0 147.0,197.0 150.0,200.0" fill="none" stroke="#707070" stroke-width="1.4" stroke-linejoin="round"/>
<polyline points="187.0,233.0 198.0,228.0 207.0,228.0" fill="none" stroke="#707070" stroke-width="1.4" stroke-linejoin="round"/>
<polyline points="243.0,247.0 245.0,245.0 268.0,247.5" fill="none" stroke="#707070" stroke-width="1.4" stroke-linejoin="round"/>
<polyline points="322.0,310.0 349.0,308.0" fill="none" stroke="#707070" stroke-width="1.4" stroke-linejoin="round"/>
<polyline points="466.0,224.0 476.0,225.0" fill="none" stroke="#707070" stroke-width="1.4" stroke-linejoin="round"/>
<polyline points="800.0,262.0 806.0,258.5 810.0,257.6 915.0,257.6" fill="none" stroke="#707070" stroke-width="1.4" stroke-linejoin="round"/>
<polyline points="930.0,327.0 940.0,327.0" fill="none" stroke="#707070" stroke-width="1.4" stroke-linejoin="round"/>
<g fill="#606060"><rect x="384.8" y="219.8" width="1.2" height="1.2"/><rect x="389.5" y="223.8" width="1.2" height="1.2"/><rect x="388.0" y="223.4" width="1.2" height="1.2"/><rect x="368.8" y="214.3" width="1.2" height="1.2"/><rect x="393.5" y="218.0" width="1.2" height="1.2"/><rect x="392.3" y="207.3" width="1.2" height="1.2"/><rect x="380.7" y="209.9" width="1.2" height="1.2"/><rect x="382.7" y="216.5" width="1.2" height="1.2"/><rect x="368.4" y="209.3" width="1.2" height="1.2"/><rect x="375.5" y="223.3" width="1.2" height="1.2"/><rect x="388.7" y="208.2" width="1.2" height="1.2"/><rect x="389.5" y="207.8" width="1.2" height="1.2"/><rect x="384.7" y="207.5" width="1.2" height="1.2"/><rect x="368.0" y="222.4" width="1.2" height="1.2"/><rect x="373.7" y="209.3" width="1.2" height="1.2"/><rect x="394.5" y="222.4" width="1.2" height="1.2"/><rect x="375.8" y="224.2" width="1.2" height="1.2"/><rect x="382.6" y="218.6" width="1.2" height="1.2"/><rect x="373.5" y="223.8" width="1.2" height="1.2"/><rect x="386.6" y="224.3" width="1.2" height="1.2"/><rect x="392.1" y="211.0" width="1.2" height="1.2"/><rect x="377.8" y="208.3" width="1.2" height="1.2"/><rect x="371.9" y="206.3" width="1.2" height="1.2"/><rect x="376.1" y="217.1" width="1.2" height="1.2"/><rect x="368.1" y="218.6" width="1.2" height="1.2"/><rect x="400.1" y="186.2" width="1.2" height="1.2"/><rect x="407.3" y="189.6" width="1.2" height="1.2"/><rect x="399.7" y="189.6" width="1.2" height="1.2"/><rect x="405.6" y="181.1" width="1.2" height="1.2"/><rect x="409.6" y="180.5" width="1.2" height="1.2"/><rect x="406.2" y="196.9" width="1.2" height="1.2"/><rect x="395.3" y="195.8" width="1.2" height="1.2"/><rect x="400.5" y="191.6" width="1.2" height="1.2"/><rect x="395.1" y="180.9" width="1.2" height="1.2"/><rect x="397.7" y="199.1" width="1.2" height="1.2"/><rect x="397.9" y="195.1" width="1.2" height="1.2"/><rect x="408.9" y="198.8" width="1.2" height="1.2"/><rect x="458.4" y="225.6" width="1.2" height="1.2"/><rect x="460.2" y="238.3" width="1.2" height="1.2"/><rect x="456.1" y="237.5" width="1.2" height="1.2"/><rect x="463.0" y="240.8" width="1.2" height="1.2"/><rect x="455.4" y="243.4" width="1.2" height="1.2"/><rect x="455.9" y="225.2" width="1.2" height="1.2"/><rect x="461.1" y="242.5" width="1.2" height="1.2"/><rect x="458.4" y="242.7" width="1.2" height="1.2"/><rect x="460.5" y="224.4" width="1.2" height="1.2"/><rect x="458.2" y="220.3" width="1.2" height="1.2"/><rect x="477.5" y="223.0" width="1.2" height="1.2"/><rect x="489.1" y="239.9" width="1.2" height="1.2"/><rect x="479.1" y="221.0" width="1.2" height="1.2"/><rect x="494.7" y="230.7" width="1.2" height="1.2"/><rect x="483.7" y="224.7" width="1.2" height="1.2"/><rect x="487.3" y="236.5" width="1.2" height="1.2"/><rect x="484.7" y="228.4" width="1.2" height="1.2"/><rect x="477.1" y="238.3" width="1.2" height="1.2"/><rect x="476.6" y="229.9" width="1.2" height="1.2"/><rect x="491.9" y="222.6" width="1.2" height="1.2"/><rect x="489.9" y="239.0" width="1.2" height="1.2"/><rect x="488.0" y="235.8" width="1.2" height="1.2"/><rect x="478.0" y="228.7" width="1.2" height="1.2"/><rect x="478.8" y="236.9" width="1.2" height="1.2"/><rect x="498.1" y="232.4" width="1.2" height="1.2"/><rect x="508.0" y="241.6" width="1.2" height="1.2"/><rect x="507.7" y="232.4" width="1.2" height="1.2"/><rect x="500.8" y="238.8" width="1.2" height="1.2"/><rect x="500.7" y="228.7" width="1.2" height="1.2"/><rect x="499.7" y="225.4" width="1.2" height="1.2"/><rect x="499.3" y="244.7" width="1.2" height="1.2"/><rect x="507.4" y="236.4" width="1.2" height="1.2"/><rect x="501.0" y="229.8" width="1.2" height="1.2"/><rect x="495.2" y="228.3" width="1.2" height="1.2"/><rect x="552.6" y="252.0" width="1.2" height="1.2"/><rect x="538.3" y="247.2" width="1.2" height="1.2"/><rect x="552.3" y="241.7" width="1.2" height="1.2"/><rect x="548.6" y="245.6" width="1.2" height="1.2"/><rect x="538.4" y="242.3" width="1.2" height="1.2"/><rect x="535.5" y="229.1" width="1.2" height="1.2"/><rect x="552.2" y="241.5" width="1.2" height="1.2"/><rect x="536.0" y="256.7" width="1.2" height="1.2"/><rect x="548.1" y="234.8" width="1.2" height="1.2"/><rect x="526.4" y="232.8" width="1.2" height="1.2"/><rect x="534.5" y="240.3" width="1.2" height="1.2"/><rect x="541.7" y="249.0" width="1.2" height="1.2"/><rect x="548.0" y="247.9" width="1.2" height="1.2"/><rect x="537.8" y="238.6" width="1.2" height="1.2"/><rect x="551.1" y="249.7" width="1.2" height="1.2"/><rect x="537.9" y="250.6" width="1.2" height="1.2"/><rect x="555.6" y="241.3" width="1.2" height="1.2"/><rect x="559.2" y="257.4" width="1.2" height="1.2"/><rect x="543.6" y="231.8" width="1.2" height="1.2"/><rect x="531.6" y="250.2" width="1.2" height="1.2"/><rect x="557.9" y="228.6" width="1.2" height="1.2"/><rect x="549.5" y="243.2" width="1.2" height="1.2"/><rect x="550.8" y="210.3" width="1.2" height="1.2"/><rect x="552.5" y="234.9" width="1.2" height="1.2"/><rect x="548.6" y="225.2" width="1.2" height="1.2"/><rect x="547.2" y="246.5" width="1.2" height="1.2"/><rect x="547.7" y="243.2" width="1.2" height="1.2"/><rect x="526.9" y="209.6" width="1.2" height="1.2"/><rect x="541.0" y="239.0" width="1.2" height="1.2"/><rect x="533.4" y="241.2" width="1.2" height="1.2"/><rect x="585.2" y="207.1" width="1.2" height="1.2"/><rect x="578.9" y="216.3" width="1.2" height="1.2"/><rect x="562.2" y="211.7" width="1.2" height="1.2"/><rect x="572.7" y="214.1" width="1.2" height="1.2"/><rect x="567.7" y="206.8" width="1.2" height="1.2"/><rect x="578.6" y="224.0" width="1.2" height="1.2"/><rect x="584.5" y="234.5" width="1.2" height="1.2"/><rect x="569.5" y="250.2" width="1.2" height="1.2"/><rect x="560.0" y="225.3" width="1.2" height="1.2"/><rect x="571.1" y="225.5" width="1.2" height="1.2"/><rect x="564.6" y="246.6" width="1.2" height="1.2"/><rect x="575.0" y="206.8" width="1.2" height="1.2"/><rect x="584.5" y="209.7" width="1.2" height="1.2"/><rect x="581.8" y="222.0" width="1.2" height="1.2"/><rect x="583.2" y="252.9" width="1.2" height="1.2"/><rect x="592.7" y="226.0" width="1.2" height="1.2"/><rect x="592.5" y="237.1" width="1.2" height="1.2"/><rect x="574.8" y="212.1" width="1.2" height="1.2"/><rect x="583.8" y="233.2" width="1.2" height="1.2"/><rect x="598.3" y="253.4" width="1.2" height="1.2"/><rect x="584.3" y="222.6" width="1.2" height="1.2"/><rect x="595.7" y="205.0" width="1.2" height="1.2"/><rect x="564.3" y="233.3" width="1.2" height="1.2"/><rect x="584.6" y="212.0" width="1.2" height="1.2"/><rect x="585.2" y="249.6" width="1.2" height="1.2"/><rect x="575.0" y="226.6" width="1.2" height="1.2"/><rect x="569.1" y="219.6" width="1.2" height="1.2"/><rect x="598.9" y="224.0" width="1.2" height="1.2"/><rect x="598.4" y="250.7" width="1.2" height="1.2"/><rect x="583.8" y="218.0" width="1.2" height="1.2"/><rect x="599.2" y="229.8" width="1.2" height="1.2"/><rect x="576.6" y="221.0" width="1.2" height="1.2"/><rect x="599.4" y="229.6" width="1.2" height="1.2"/><rect x="571.5" y="228.8" width="1.2" height="1.2"/><rect x="604.9" y="230.4" width="1.2" height="1.2"/><rect x="617.7" y="209.1" width="1.2" height="1.2"/><rect x="631.3" y="243.7" width="1.2" height="1.2"/><rect x="600.5" y="224.6" width="1.2" height="1.2"/><rect x="611.0" y="250.8" width="1.2" height="1.2"/><rect x="631.3" y="206.0" width="1.2" height="1.2"/><rect x="610.7" y="200.1" width="1.2" height="1.2"/><rect x="639.6" y="209.1" width="1.2" height="1.2"/><rect x="624.3" y="220.9" width="1.2" height="1.2"/><rect x="625.8" y="229.3" width="1.2" height="1.2"/><rect x="629.7" y="197.7" width="1.2" height="1.2"/><rect x="630.4" y="209.5" width="1.2" height="1.2"/><rect x="621.3" y="211.8" width="1.2" height="1.2"/><rect x="611.9" y="224.4" width="1.2" height="1.2"/><rect x="618.6" y="213.5" width="1.2" height="1.2"/><rect x="629.8" y="228.4" width="1.2" height="1.2"/><rect x="601.5" y="206.4" width="1.2" height="1.2"/><rect x="618.2" y="249.6" width="1.2" height="1.2"/><rect x="635.5" y="225.5" width="1.2" height="1.2"/><rect x="600.6" y="240.6" width="1.2" height="1.2"/><rect x="617.1" y="227.4" width="1.2" height="1.2"/><rect x="628.3" y="231.1" width="1.2" height="1.2"/><rect x="619.3" y="249.3" width="1.2" height="1.2"/><rect x="615.4" y="215.5" width="1.2" height="1.2"/><rect x="634.1" y="202.8" width="1.2" height="1.2"/><rect x="611.9" y="244.0" width="1.2" height="1.2"/><rect x="602.6" y="244.4" width="1.2" height="1.2"/><rect x="627.8" y="218.1" width="1.2" height="1.2"/><rect x="611.5" y="240.7" width="1.2" height="1.2"/><rect x="636.4" y="199.3" width="1.2" height="1.2"/><rect x="619.1" y="225.7" width="1.2" height="1.2"/><rect x="619.9" y="211.5" width="1.2" height="1.2"/><rect x="606.1" y="228.1" width="1.2" height="1.2"/><rect x="632.5" y="194.4" width="1.2" height="1.2"/><rect x="645.8" y="249.2" width="1.2" height="1.2"/><rect x="659.8" y="239.8" width="1.2" height="1.2"/><rect x="640.6" y="243.4" width="1.2" height="1.2"/><rect x="664.5" y="259.9" width="1.2" height="1.2"/><rect x="657.5" y="202.9" width="1.2" height="1.2"/><rect x="661.1" y="213.2" width="1.2" height="1.2"/><rect x="656.1" y="257.1" width="1.2" height="1.2"/><rect x="657.8" y="208.1" width="1.2" height="1.2"/><rect x="647.3" y="255.1" width="1.2" height="1.2"/><rect x="643.7" y="236.6" width="1.2" height="1.2"/><rect x="650.3" y="209.7" width="1.2" height="1.2"/><rect x="655.6" y="202.6" width="1.2" height="1.2"/><rect x="642.7" y="222.8" width="1.2" height="1.2"/><rect x="641.8" y="203.5" width="1.2" height="1.2"/><rect x="654.4" y="244.5" width="1.2" height="1.2"/><rect x="662.0" y="208.1" width="1.2" height="1.2"/><rect x="650.8" y="218.9" width="1.2" height="1.2"/><rect x="655.0" y="229.4" width="1.2" height="1.2"/><rect x="663.5" y="222.5" width="1.2" height="1.2"/><rect x="641.4" y="241.8" width="1.2" height="1.2"/><rect x="643.8" y="237.9" width="1.2" height="1.2"/><rect x="652.6" y="254.6" width="1.2" height="1.2"/><rect x="684.4" y="232.3" width="1.2" height="1.2"/><rect x="674.2" y="228.1" width="1.2" height="1.2"/><rect x="673.9" y="240.0" width="1.2" height="1.2"/><rect x="683.1" y="203.0" width="1.2" height="1.2"/><rect x="673.2" y="217.3" width="1.2" height="1.2"/><rect x="690.8" y="205.8" width="1.2" height="1.2"/><rect x="690.0" y="234.3" width="1.2" height="1.2"/><rect x="668.0" y="235.1" width="1.2" height="1.2"/><rect x="668.2" y="202.5" width="1.2" height="1.2"/><rect x="685.8" y="209.3" width="1.2" height="1.2"/><rect x="695.7" y="223.8" width="1.2" height="1.2"/><rect x="676.3" y="242.8" width="1.2" height="1.2"/><rect x="666.0" y="238.5" width="1.2" height="1.2"/><rect x="666.9" y="204.0" width="1.2" height="1.2"/><rect x="698.3" y="235.9" width="1.2" height="1.2"/><rect x="672.8" y="202.0" width="1.2" height="1.2"/><rect x="699.0" y="234.9" width="1.2" height="1.2"/><rect x="693.7" y="203.4" width="1.2" height="1.2"/><rect x="686.9" y="216.3" width="1.2" height="1.2"/><rect x="673.2" y="215.0" width="1.2" height="1.2"/><rect x="686.5" y="215.9" width="1.2" height="1.2"/><rect x="678.5" y="203.2" width="1.2" height="1.2"/><rect x="694.1" y="233.9" width="1.2" height="1.2"/><rect x="693.2" y="221.0" width="1.2" height="1.2"/><rect x="694.8" y="226.0" width="1.2" height="1.2"/><rect x="685.7" y="229.4" width="1.2" height="1.2"/><rect x="690.9" y="218.7" width="1.2" height="1.2"/><rect x="668.4" y="197.0" width="1.2" height="1.2"/><rect x="672.1" y="197.4" width="1.2" height="1.2"/><rect x="696.1" y="223.9" width="1.2" height="1.2"/><rect x="715.2" y="165.0" width="1.2" height="1.2"/><rect x="709.4" y="209.5" width="1.2" height="1.2"/><rect x="712.4" y="186.4" width="1.2" height="1.2"/><rect x="709.3" y="170.0" width="1.2" height="1.2"/><rect x="703.1" y="173.0" width="1.2" height="1.2"/><rect x="707.5" y="184.3" width="1.2" height="1.2"/><rect x="717.6" y="172.6" width="1.2" height="1.2"/><rect x="705.1" y="178.9" width="1.2" height="1.2"/><rect x="703.2" y="179.4" width="1.2" height="1.2"/><rect x="704.7" y="189.1" width="1.2" height="1.2"/><rect x="700.6" y="211.2" width="1.2" height="1.2"/><rect x="707.4" y="211.9" width="1.2" height="1.2"/><rect x="713.8" y="198.7" width="1.2" height="1.2"/><rect x="709.4" y="212.3" width="1.2" height="1.2"/><rect x="733.5" y="243.4" width="1.2" height="1.2"/><rect x="738.7" y="243.5" width="1.2" height="1.2"/><rect x="751.9" y="233.3" width="1.2" height="1.2"/><rect x="736.0" y="230.5" width="1.2" height="1.2"/><rect x="736.9" y="231.6" width="1.2" height="1.2"/><rect x="742.0" y="249.5" width="1.2" height="1.2"/><rect x="740.9" y="236.2" width="1.2" height="1.2"/><rect x="744.0" y="235.7" width="1.2" height="1.2"/><rect x="752.0" y="244.4" width="1.2" height="1.2"/><rect x="734.9" y="234.8" width="1.2" height="1.2"/><rect x="750.2" y="248.8" width="1.2" height="1.2"/><rect x="749.4" y="238.6" width="1.2" height="1.2"/><rect x="759.3" y="230.1" width="1.2" height="1.2"/><rect x="731.8" y="245.6" width="1.2" height="1.2"/><rect x="742.3" y="230.9" width="1.2" height="1.2"/><rect x="746.5" y="249.8" width="1.2" height="1.2"/><rect x="745.6" y="237.0" width="1.2" height="1.2"/><rect x="732.8" y="231.4" width="1.2" height="1.2"/><rect x="757.0" y="239.8" width="1.2" height="1.2"/><rect x="758.1" y="231.1" width="1.2" height="1.2"/><rect x="737.3" y="231.0" width="1.2" height="1.2"/><rect x="741.9" y="231.2" width="1.2" height="1.2"/><rect x="767.6" y="269.1" width="1.2" height="1.2"/><rect x="768.1" y="265.5" width="1.2" height="1.2"/><rect x="765.4" y="274.7" width="1.2" height="1.2"/><rect x="766.8" y="270.1" width="1.2" height="1.2"/><rect x="769.0" y="270.3" width="1.2" height="1.2"/><rect x="765.8" y="268.1" width="1.2" height="1.2"/><rect x="776.6" y="248.1" width="1.2" height="1.2"/><rect x="788.8" y="249.0" width="1.2" height="1.2"/><rect x="787.9" y="243.2" width="1.2" height="1.2"/><rect x="775.3" y="248.1" width="1.2" height="1.2"/><rect x="782.3" y="248.6" width="1.2" height="1.2"/><rect x="780.6" y="249.4" width="1.2" height="1.2"/><rect x="785.9" y="253.7" width="1.2" height="1.2"/><rect x="779.6" y="246.7" width="1.2" height="1.2"/><rect x="787.4" y="243.4" width="1.2" height="1.2"/><rect x="776.7" y="244.7" width="1.2" height="1.2"/><rect x="793.4" y="272.0" width="1.2" height="1.2"/><rect x="796.3" y="256.0" width="1.2" height="1.2"/><rect x="793.5" y="247.9" width="1.2" height="1.2"/><rect x="794.0" y="248.0" width="1.2" height="1.2"/><rect x="794.7" y="265.2" width="1.2" height="1.2"/><rect x="794.0" y="247.2" width="1.2" height="1.2"/><rect x="802.0" y="265.7" width="1.2" height="1.2"/><rect x="797.0" y="269.3" width="1.2" height="1.2"/><rect x="798.7" y="266.5" width="1.2" height="1.2"/><rect x="799.2" y="269.7" width="1.2" height="1.2"/><rect x="802.5" y="273.3" width="1.2" height="1.2"/><rect x="804.0" y="274.8" width="1.2" height="1.2"/><rect x="802.6" y="273.6" width="1.2" height="1.2"/><rect x="799.4" y="277.3" width="1.2" height="1.2"/><rect x="941.3" y="407.5" width="1.2" height="1.2"/><rect x="941.5" y="393.6" width="1.2" height="1.2"/><rect x="940.5" y="399.7" width="1.2" height="1.2"/><rect x="940.8" y="362.2" width="1.2" height="1.2"/><rect x="940.1" y="364.3" width="1.2" height="1.2"/><rect x="940.5" y="392.2" width="1.2" height="1.2"/></g>
<polyline points="108.0,321.5 150.0,321.0 155.0,322.0 175.0,318.0 210.0,318.0 240.0,317.0 279.5,315.2 314.7,308.4 342.0,307.4 357.7,303.5 396.7,298.6 408.4,294.7 460.0,289.8 491.6,283.4 525.6,278.7 556.0,274.6 580.0,274.0 596.5,271.8 647.6,266.7 700.0,261.5 737.0,257.9 805.6,252.7 842.7,248.5 880.0,243.5 899.8,240.8 944.0,235.0" fill="none" stroke="#20f040" stroke-width="1.8" stroke-linejoin="round"/>
<polyline points="108.0,271.0 128.0,271.0 145.0,267.0 170.0,267.0 180.0,270.0 195.0,270.0 200.0,268.0 230.0,268.0 240.0,271.0 255.0,272.0 280.0,269.0 300.0,269.0 320.0,271.0 350.0,268.5 365.0,273.0 400.0,275.0 420.0,277.0 460.0,273.4 477.6,274.6 487.0,271.7 499.9,271.7 507.0,274.6 512.8,274.6 517.4,270.5 526.8,265.8 532.7,267.6 540.9,266.4 548.0,270.5 560.8,270.0 585.0,265.0 600.0,262.5 625.0,261.0 640.0,253.5 660.0,258.0 680.0,256.0 700.0,258.0 720.0,259.0 735.0,261.0 740.0,256.0 760.0,259.6 800.0,259.0 810.0,270.0 830.0,274.5 850.0,273.0 863.0,277.0 880.0,283.0 900.0,288.0 920.0,293.0 944.0,298.0" fill="none" stroke="#107030" stroke-width="1.9" stroke-linejoin="round"/>
<polyline points="108.0,256.0 114.0,256.0 118.0,261.0 125.0,256.0 232.0,256.0 236.0,263.0 246.0,263.0 250.0,256.5 273.7,256.4 276.6,262.6 305.0,263.0 309.8,269.3 316.6,264.0 322.5,262.6 327.4,269.3 331.3,270.0 338.0,264.6 346.0,262.6 351.8,262.0 357.7,266.6 361.6,270.5 369.4,264.6 375.0,269.0 379.0,269.3 389.0,264.0 396.7,267.6 404.5,269.3 408.4,266.0 414.3,269.3 416.0,270.5 434.0,270.5 435.8,266.0 441.6,262.6 449.5,260.0 456.0,259.4 466.7,256.2 477.0,253.0 487.7,246.7 496.0,244.6 506.7,250.0 511.0,248.8 515.0,227.8 520.0,223.6 522.4,202.6 526.6,185.8 531.0,192.0 538.0,214.0 541.0,213.0 548.0,227.0 561.0,233.5 566.0,237.0 571.0,227.0 575.0,223.0 580.0,220.0 588.0,230.0 596.0,206.0 605.0,226.0 612.0,214.0 616.0,215.0 621.0,220.0 634.0,175.0 636.0,172.0 642.0,178.0 648.0,211.0 654.0,196.0 659.0,203.6 666.0,190.0 672.0,205.0 681.0,197.6 687.0,206.6 696.0,208.0 704.0,206.6 711.0,208.0 720.0,215.6 732.0,220.0 737.0,206.6 741.0,212.6 746.0,209.6 753.0,218.6 780.0,219.0 790.0,229.0 800.0,226.0 803.0,229.0 808.0,240.0 818.0,252.0 823.0,256.0 848.0,256.0 855.0,265.0 862.0,275.0 870.0,278.0 880.0,286.0 893.0,288.0 900.0,294.0 905.0,290.0 915.0,297.0 930.0,301.0 937.0,305.0 944.0,307.0" fill="none" stroke="#e00000" stroke-width="1.9" stroke-linejoin="round"/>
<polyline points="108.0,256.0 145.0,254.0 230.7,254.0 245.0,257.7 265.0,256.0 280.0,256.0 300.0,259.0 320.0,261.5 340.0,262.0 350.0,261.0 365.0,266.0 380.0,267.0 410.0,270.0 435.0,270.0 455.0,266.0 490.0,264.0 505.0,261.0 513.0,261.0 520.0,257.0 530.0,249.5 541.7,245.5 553.0,248.8 566.0,250.0 584.0,245.0 600.0,240.0 610.0,240.0 625.0,231.5 642.0,221.0 660.0,226.0 680.0,221.0 700.0,224.0 720.0,224.0 735.0,227.0 745.0,221.0 760.0,224.7 785.0,227.0 795.0,229.0 805.0,228.0 815.0,238.0 830.0,247.0 845.0,251.6 860.0,258.4 880.0,271.3 900.0,281.2 920.0,287.0 944.0,290.6" fill="none" stroke="#0000e8" stroke-width="2.1" stroke-linejoin="round"/>
<polyline points="357.0,264.0 360.0,272.0 363.0,276.0 367.0,276.0 370.0,268.0" fill="none" stroke="#f0a040" stroke-width="1.2" stroke-linejoin="round"/>
<polyline points="505.5,261.0 507.5,269.0 509.0,272.0 510.0,266.0 511.0,272.0 512.5,269.0 514.0,261.0" fill="none" stroke="#f0a040" stroke-width="1.2" stroke-linejoin="round"/>
<polyline points="591.0,244.0 594.0,254.0 597.0,258.0 600.0,252.0 603.0,258.0 606.0,254.0 610.0,244.0" fill="none" stroke="#f0a040" stroke-width="1.2" stroke-linejoin="round"/>
<polyline points="108.0,75.0 127.5,75.0 133.0,71.0 139.0,69.5 155.0,69.5 156.0,73.0 160.0,70.0 168.0,70.0 172.0,75.0 190.0,75.0 195.0,70.0 230.0,69.5 235.0,74.0 240.0,74.0 245.0,71.0 250.0,75.0 271.8,75.4 276.0,71.1 281.5,71.1 284.7,66.9 289.0,65.1 302.0,65.1 305.0,62.1 310.5,60.0 326.6,60.0 329.0,51.8 334.0,54.0 337.0,56.8 340.5,55.0 352.4,54.6 354.0,53.3 357.0,57.6 361.0,55.0 458.7,55.0 461.0,57.6 463.0,56.1 469.5,59.8 487.0,60.0 492.0,65.0 502.0,65.0 509.0,70.0 512.0,70.0 522.0,75.0 528.0,84.0 534.5,90.0 546.0,95.0 549.0,91.0 559.0,91.0 564.0,86.0 587.0,86.0 589.5,85.0 606.0,100.0 611.0,96.0 619.5,101.0 629.5,99.5 634.5,107.5 644.5,125.0 654.5,116.0 665.8,111.0 672.0,116.0 682.0,122.5 687.0,125.0 697.0,121.0 704.5,117.5 719.5,126.0 729.5,121.0 735.0,114.0 741.0,125.0 754.5,127.5 758.0,124.0 768.0,127.5 773.0,127.0 780.0,122.0 793.0,112.5 805.0,121.0 813.0,121.0 822.0,110.0 828.0,105.0 833.0,106.0 843.0,92.5 855.0,82.5 865.5,76.0 875.5,70.0 888.0,65.5 903.0,60.0 940.5,60.0 944.0,57.0" fill="none" stroke="#8a4a10" stroke-width="1.8" stroke-linejoin="round"/>
<line x1="108" y1="435.2" x2="944" y2="435.2" stroke="#181828" stroke-width="2"/>
<rect x="523" y="524" width="3" height="25" fill="#f8e010"/>
<rect x="630" y="527" width="2" height="22" fill="#f8e010"/>
<rect x="676" y="523" width="2" height="26" fill="#f8e010"/>
<rect x="733" y="522" width="2" height="27" fill="#f8e010"/>
<rect x="737" y="522" width="7" height="27" fill="#f8e010"/>
<rect x="740" y="524" width="5" height="25" fill="#f8e010"/>
<rect x="757" y="524" width="2" height="25" fill="#f8e010"/>
<rect x="845" y="524" width="9" height="25" fill="#f8e010"/>
<rect x="290" y="544" width="2" height="5" fill="#20c8f0"/>
<rect x="296" y="544" width="2" height="5" fill="#20c8f0"/>
<rect x="300" y="544" width="2" height="5" fill="#20c8f0"/>
<rect x="306" y="544" width="2" height="5" fill="#20c8f0"/>
<rect x="310" y="544" width="2" height="5" fill="#20c8f0"/>
<rect x="405" y="544" width="2" height="5" fill="#20c8f0"/>
<rect x="415" y="544" width="2" height="5" fill="#20c8f0"/>
<rect x="422" y="544" width="2" height="5" fill="#20c8f0"/>
<rect x="436" y="544" width="2" height="5" fill="#20c8f0"/>
<path d="M112.5,549.0V546.3M112.5,546.3V529.2M114.5,549.0V536.0M114.5,536.0V521.3M117.5,535.8V541.0M117.5,541.0V547.6M118.5,547.6V549.0M139.5,541.7V540.3M140.5,519.0V544.8M141.5,544.8V535.1M143.5,506.0V479.8M143.5,479.8V488.6M145.5,505.9V527.0M146.5,522.5V482.3M147.5,482.3V489.5M147.5,489.5V473.9M148.5,500.8V503.4M149.5,503.4V475.9M152.5,549.0V538.2M152.5,538.2V496.3M153.5,496.3V514.6M154.5,473.0V534.9M156.5,481.6V491.7M158.5,495.7V513.0M160.5,489.7V475.7M161.5,475.7V540.1M163.5,549.0V527.9M163.5,527.9V536.5M164.5,536.5V459.3M166.5,527.0V512.1M166.5,512.1V477.9M167.5,477.9V479.4M168.5,479.4V475.9M169.5,483.1V508.3M170.5,508.3V490.0M171.5,490.0V512.7M172.5,474.1V509.1M173.5,509.1V437.2M174.5,437.2V478.0M174.5,478.0V505.5M176.5,505.3V488.6M176.5,488.6V444.7M178.5,503.0V481.2M178.5,481.2V516.4M179.5,516.4V484.9M179.5,484.9V454.1M181.5,492.4V490.6M181.5,490.6V509.9M182.5,509.9V474.3M183.5,538.0V536.4M185.5,499.7V533.0M186.5,533.0V499.7M189.5,525.8V515.0M190.5,515.0V484.6M191.5,484.6V480.1M191.5,480.1V527.2M192.5,527.2V481.9M193.5,481.9V508.7M194.5,508.7V540.4M195.5,525.6V549.0M196.5,549.0V514.6M197.5,538.3V527.0M198.5,527.0V532.0M200.5,505.1V494.9M202.5,531.2V503.0M204.5,522.7V510.8M206.5,513.8V540.1M207.5,540.1V538.6M207.5,538.6V505.6M210.5,519.3V523.3M211.5,523.3V468.0M212.5,468.0V513.6M212.5,513.6V485.0M214.5,525.7V473.8M215.5,496.1V499.3M216.5,499.3V480.3M217.5,480.3V463.2M217.5,463.2V476.6M218.5,476.6V447.2M219.5,452.1V519.1M220.5,506.6V499.7M221.5,499.7V486.2M222.5,486.2V514.8M222.5,514.8V497.1M223.5,497.1V514.2M223.5,514.2V433.9M224.5,433.9V443.9M225.5,443.9V484.8M225.5,484.8V490.6M227.5,501.3V510.6M230.5,478.0V520.9M230.5,520.9V525.2M234.5,492.3V523.9M235.5,516.3V503.3M236.5,472.4V482.6M237.5,482.6V484.7M238.5,484.7V524.6M239.5,524.6V500.4M240.5,500.4V530.8M242.5,499.0V489.7M243.5,489.7V518.7M245.5,508.2V535.8M246.5,535.8V505.8M247.5,529.9V533.8M248.5,500.2V497.6M249.5,497.6V493.6M250.5,539.7V518.6M251.5,518.6V496.8M252.5,547.3V499.7M253.5,499.7V516.3M255.5,525.7V509.3M256.5,509.3V521.4M258.5,543.2V506.5M258.5,506.5V513.2M259.5,513.2V543.1M262.5,502.2V549.0M264.5,549.0V520.0M264.5,520.0V511.5M267.5,549.0V487.6M267.5,487.6V523.7M269.5,491.5V541.8M269.5,541.8V504.2M270.5,504.2V532.2M271.5,532.2V543.9M271.5,543.9V519.4M272.5,519.4V549.0M272.5,549.0V531.5M273.5,531.5V521.1M274.5,521.1V506.2M279.5,461.0V470.7M280.5,522.3V524.6M281.5,524.6V460.7M282.5,460.7V503.5M284.5,514.6V506.7M285.5,476.8V499.7M287.5,493.9V517.2M288.5,549.0V486.2M290.5,549.0V522.8M293.5,498.4V520.9M295.5,497.2V511.5M298.5,475.9V506.9M298.5,506.9V513.0M302.5,425.3V452.4M303.5,444.1V491.2M305.5,498.1V507.2M306.5,507.2V492.7M307.5,492.7V507.4M307.5,507.4V480.9M308.5,480.9V505.9M309.5,509.4V510.7M311.5,492.6V520.2M312.5,535.8V549.0M313.5,549.0V511.7M313.5,511.7V498.7M315.5,496.4V526.4M315.5,526.4V517.2M317.5,482.0V527.9M318.5,505.7V527.0M320.5,544.8V549.0M320.5,549.0V545.7M321.5,549.0V499.7M322.5,499.7V547.9M323.5,533.3V549.0M325.5,508.8V483.7M327.5,481.6V549.0M328.5,549.0V528.2M329.5,522.0V511.8M332.5,505.7V500.4M334.5,486.1V529.8M335.5,529.8V523.0M337.5,521.8V536.2M339.5,549.0V492.3M342.5,531.6V534.2M343.5,534.2V502.9M344.5,500.6V482.7M345.5,482.7V483.9M346.5,483.9V493.0M346.5,493.0V540.2M347.5,540.2V490.1M347.5,490.1V538.8M348.5,538.8V547.4M349.5,547.4V549.0M351.5,491.3V501.3M351.5,501.3V506.7M352.5,506.7V435.2M352.5,435.2V513.4M354.5,410.8V416.6M354.5,416.6V486.5M355.5,501.7V391.0M356.5,391.0V466.6M357.5,468.6V475.8M359.5,424.7V417.7M360.5,417.7V409.4M363.5,423.7V410.1M365.5,449.4V496.4M366.5,477.0V473.0M368.5,461.0V423.7M369.5,499.4V374.0M370.5,379.9V487.7M373.5,453.1V385.5M377.5,490.0V407.8M378.5,425.9V484.7M379.5,484.7V468.8M380.5,468.8V504.1M383.5,470.1V430.9M383.5,430.9V468.8M385.5,448.1V452.7M386.5,468.1V497.2M388.5,539.5V538.8M389.5,521.1V443.8M390.5,443.8V505.5M393.5,499.1V455.7M395.5,492.5V510.0M396.5,510.0V479.8M397.5,479.8V418.3M398.5,484.0V400.0M399.5,400.0V394.1M400.5,394.1V424.8M401.5,491.2V454.5M402.5,461.0V473.3M403.5,473.3V502.2M403.5,502.2V505.3M406.5,512.1V494.1M406.5,494.1V502.1M408.5,535.6V396.5M409.5,396.5V479.0M409.5,479.0V428.3M411.5,532.7V505.5M414.5,491.2V401.8M416.5,401.8V435.1M416.5,435.1V407.9M418.5,490.1V511.2M420.5,398.6V481.5M421.5,481.5V415.7M421.5,415.7V493.2M422.5,493.2V483.2M425.5,503.1V475.9M426.5,475.9V441.3M427.5,433.6V513.4M430.5,549.0V511.9M431.5,511.9V519.4M433.5,544.3V463.2M434.5,484.5V549.0M435.5,549.0V528.9M435.5,528.9V503.8M437.5,461.6V511.6M437.5,511.6V485.2M438.5,485.2V506.0M440.5,534.4V490.2M440.5,490.2V452.2M441.5,452.2V540.2M442.5,540.2V518.6M442.5,518.6V459.0M443.5,459.0V479.9M444.5,479.9V439.3M445.5,524.9V546.8M445.5,546.8V549.0M447.5,504.1V470.6M450.5,521.9V459.1M452.5,519.9V510.6M453.5,510.6V483.7M455.5,493.7V460.1M456.5,461.7V499.2M457.5,499.2V506.0M457.5,506.0V485.6M458.5,485.6V445.7M459.5,445.7V478.7M460.5,502.7V443.3M461.5,443.3V496.7M464.5,480.3V444.2M465.5,444.2V512.6M466.5,512.6V485.5M467.5,470.0V482.9M468.5,482.9V455.2M468.5,455.2V439.8M470.5,520.5V522.8M470.5,522.8V500.5M472.5,519.7V509.1M475.5,503.0V512.2M476.5,512.2V526.5M477.5,549.0V432.9M480.5,425.0V461.5M481.5,461.5V540.0M483.5,482.9V451.5M483.5,451.5V423.0M489.5,431.1V418.2M489.5,418.2V425.5M490.5,425.5V508.9M491.5,508.9V480.9M492.5,485.5V517.4M493.5,517.4V488.2M494.5,521.7V515.6M495.5,515.6V502.3M496.5,502.3V416.2M497.5,506.6V535.1M498.5,535.1V495.8M499.5,495.8V412.2M500.5,412.2V488.4M501.5,488.4V416.0M502.5,446.3V470.5M504.5,404.9V433.7M504.5,433.7V427.7M507.5,478.5V454.9M507.5,454.9V473.5M508.5,473.5V465.7M509.5,466.0V382.8M510.5,474.4V503.9M511.5,503.9V454.1M512.5,439.8V485.4M514.5,485.4V474.0M514.5,474.0V470.0M517.5,420.0V405.5M517.5,405.5V462.8M518.5,462.8V487.5M519.5,487.5V483.5M520.5,477.4V418.7M522.5,497.2V498.5M524.5,490.8V486.3M525.5,458.8V447.4M525.5,447.4V536.9M526.5,536.9V496.1M527.5,450.2V518.9M528.5,518.9V440.5M532.5,549.0V479.2M533.5,479.2V527.5M535.5,541.5V487.0M535.5,487.0V518.9M537.5,487.0V540.6M537.5,540.6V410.3M538.5,410.3V461.8M538.5,461.8V423.8M540.5,425.7V419.1M541.5,497.1V471.6M542.5,471.6V491.3M545.5,514.7V493.5M545.5,493.5V423.2M546.5,423.2V502.6M547.5,452.3V417.3M550.5,511.4V474.3M553.5,413.3V456.8M555.5,392.4V521.8M555.5,521.8V415.7M556.5,415.7V456.0M558.5,501.3V431.4M559.5,431.4V475.4M561.5,400.0V429.4M561.5,429.4V414.2M562.5,414.2V509.9M563.5,509.9V408.6M565.5,474.2V495.7M566.5,495.7V418.9M566.5,418.9V491.7M567.5,491.7V408.1M568.5,500.9V411.0M571.5,500.7V481.2M571.5,481.2V508.0M572.5,508.0V383.6M573.5,479.8V498.5M574.5,498.5V508.0M576.5,475.8V457.9M576.5,457.9V472.0M577.5,472.0V505.8M577.5,505.8V492.7M578.5,492.7V369.2M579.5,369.2V517.3M579.5,517.3V467.3M580.5,467.3V513.1M582.5,347.8V466.0M583.5,466.0V491.2M584.5,491.2V421.2M585.5,421.2V480.3M586.5,480.3V492.6M586.5,492.6V365.3M587.5,365.3V430.9M589.5,337.7V493.1M590.5,493.1V391.7M590.5,391.7V379.9M591.5,379.9V462.6M592.5,462.6V439.7M594.5,439.7V430.5M594.5,430.5V358.0M595.5,358.0V439.2M595.5,439.2V461.2M596.5,461.2V343.7M598.5,427.8V323.8M599.5,464.2V459.7M601.5,329.8V334.5M602.5,334.5V446.8M604.5,474.1V458.9M605.5,458.9V408.5M605.5,408.5V396.8M607.5,443.1V487.6M607.5,487.6V447.3M608.5,447.3V446.3M609.5,472.7V485.3M610.5,485.3V410.1M612.5,491.5V525.3M612.5,525.3V436.9M613.5,436.9V524.1M613.5,524.1V436.7M615.5,538.8V513.4M617.5,503.1V506.8M620.5,489.9V524.4M623.5,523.7V475.4M623.5,475.4V434.4M624.5,434.4V415.4M625.5,415.4V497.3M626.5,455.2V453.2M626.5,453.2V424.2M627.5,424.2V439.5M628.5,439.5V542.6M628.5,542.6V420.7M630.5,477.7V506.8M631.5,537.1V468.2M636.5,414.4V530.8M636.5,530.8V496.2M637.5,496.2V541.3M638.5,527.7V530.8M639.5,530.8V548.4M639.5,548.4V401.5M641.5,517.3V543.9M641.5,543.9V535.1M642.5,535.1V437.1M644.5,447.2V506.6M646.5,503.5V405.2M647.5,405.2V471.4M648.5,471.4V489.5M649.5,519.3V443.1M649.5,443.1V389.1M650.5,389.1V423.6M651.5,423.6V489.5M651.5,489.5V473.0M654.5,474.9V507.3M656.5,472.4V486.2M657.5,486.2V382.4M658.5,484.8V443.2M660.5,513.5V420.0M661.5,437.4V423.3M662.5,423.3V461.0M662.5,461.0V357.1M663.5,357.1V360.8M664.5,360.8V539.1M665.5,513.1V347.1M666.5,347.1V464.3M668.5,359.3V362.1M670.5,386.2V472.5M672.5,403.4V493.0M673.5,473.2V449.5M674.5,518.8V370.5M675.5,512.4V516.0M676.5,516.0V510.6M677.5,510.6V496.2M677.5,496.2V411.6M680.5,408.0V463.4M682.5,380.3V456.6M683.5,456.6V403.1M683.5,403.1V504.4M684.5,504.4V455.8M685.5,455.8V461.4M687.5,435.2V454.1M688.5,506.2V367.5M688.5,367.5V490.6M692.5,509.7V445.4M692.5,445.4V502.6M693.5,502.6V513.3M694.5,416.1V414.7M695.5,515.1V506.0M696.5,506.0V428.5M696.5,428.5V508.7M697.5,508.7V418.1M701.5,526.8V494.7M702.5,494.7V483.1M703.5,483.1V401.2M703.5,401.2V443.7M705.5,498.3V486.5M706.5,486.5V493.1M706.5,493.1V497.9M708.5,526.6V493.2M709.5,493.2V500.7M710.5,472.6V471.0M711.5,471.0V397.0M713.5,457.2V519.9M713.5,519.9V520.5M716.5,425.3V531.0M716.5,531.0V508.2M718.5,537.7V451.3M719.5,451.3V405.3M721.5,427.4V488.7M725.5,518.6V492.0M726.5,386.5V493.6M727.5,493.6V528.6M728.5,531.9V519.9M729.5,519.9V537.1M732.5,441.2V526.3M732.5,526.3V509.6M734.5,441.9V525.0M741.5,439.3V406.2M741.5,406.2V523.7M742.5,523.7V423.2M742.5,423.2V490.9M744.5,368.6V411.2M747.5,500.2V394.7M748.5,394.7V476.1M749.5,476.1V421.4M749.5,421.4V495.3M752.5,473.8V399.7M755.5,391.0V426.3M756.5,426.3V392.3M758.5,429.2V490.8M760.5,472.3V502.5M760.5,502.5V469.5M761.5,469.5V517.1M762.5,517.1V444.6M762.5,444.6V527.5M763.5,527.5V450.1M765.5,460.1V489.1M765.5,489.1V515.7M766.5,515.7V439.9M767.5,548.9V436.1M768.5,436.1V513.4M768.5,513.4V456.3M770.5,487.9V459.8M771.5,459.8V518.6M772.5,522.2V488.3M773.5,441.4V485.2M774.5,485.2V491.1M775.5,491.1V440.1M776.5,440.1V531.0M778.5,541.4V513.1M778.5,513.1V509.2M779.5,509.2V549.0M780.5,549.0V509.1M781.5,549.0V498.4M781.5,498.4V549.0M782.5,549.0V532.9M783.5,532.9V500.5M784.5,514.7V476.0M785.5,446.3V448.5M786.5,531.6V529.7M788.5,517.4V481.1M788.5,481.1V534.8M789.5,534.8V549.0M790.5,549.0V478.7M791.5,538.7V518.9M792.5,518.9V547.5M794.5,490.3V478.3M795.5,478.3V521.8M796.5,471.4V456.7M797.5,456.7V511.4M798.5,476.1V534.9M799.5,534.9V538.1M799.5,538.1V505.3M800.5,505.3V494.1M802.5,515.6V490.9M803.5,490.9V445.7M804.5,471.7V516.6M805.5,514.4V466.5M806.5,466.5V446.9M806.5,446.9V440.8M807.5,440.8V514.3M808.5,494.3V509.8M809.5,509.8V500.8M809.5,500.8V483.3M810.5,483.3V492.5M812.5,487.9V545.1M813.5,517.8V538.1M817.5,549.0V531.8M818.5,549.0V544.7M821.5,523.8V526.9M822.5,526.9V524.3M822.5,524.3V528.6M823.5,528.6V529.9M824.5,529.9V538.3M825.5,531.3V534.8M828.5,549.0V542.5M829.5,542.5V536.4M830.5,526.5V549.0M851.5,549.0V544.1M851.5,544.1V549.0M887.5,549.0V542.7M915.5,549.0V547.8M915.5,547.8V549.0M916.5,549.0V541.3M917.5,541.3V527.0M918.5,538.9V543.8M918.5,543.8V537.8M920.5,541.4V536.3M920.5,536.3V543.1M922.5,549.0V541.4M922.5,541.4V538.0M923.5,538.0V549.0M923.5,549.0V539.7M926.5,542.0V549.0M927.5,542.6V549.0M928.5,549.0V545.9M929.5,547.3V549.0M939.5,549.0V544.1M940.5,544.1V537.9M940.5,537.9V549.0" fill="none" stroke="#cc80ff" stroke-width="1"/>
<path d="M113.5,529.2V549.0M116.5,521.3V549.0M116.5,549.0V535.8M136.5,549.0V544.2M138.5,544.2V549.0M138.5,549.0V541.7M140.5,540.3V519.0M142.5,535.1V533.8M142.5,533.8V506.0M144.5,488.6V505.9M145.5,527.0V522.5M148.5,473.9V500.8M150.5,475.9V518.7M150.5,518.7V549.0M153.5,514.6V473.0M155.5,534.9V523.3M155.5,523.3V449.8M156.5,449.8V481.6M157.5,491.7V495.7M159.5,513.0V489.7M161.5,540.1V549.0M165.5,459.3V527.0M168.5,475.9V441.0M169.5,441.0V483.1M171.5,512.7V474.1M177.5,444.7V503.0M180.5,454.1V492.4M183.5,474.3V538.0M184.5,536.4V499.7M187.5,499.7V525.1M188.5,525.1V525.8M194.5,540.4V525.6M196.5,514.6V538.3M199.5,532.0V505.1M201.5,494.9V531.2M202.5,503.0V480.9M203.5,480.9V522.7M204.5,510.8V498.0M205.5,498.0V496.0M205.5,496.0V513.8M208.5,505.6V522.4M209.5,522.4V481.7M210.5,481.7V519.3M213.5,485.0V525.7M214.5,473.8V496.1M218.5,447.2V452.1M220.5,519.1V506.6M226.5,490.6V501.3M228.5,510.6V477.7M231.5,525.2V516.5M232.5,516.5V513.8M233.5,513.8V492.3M235.5,523.9V516.3M236.5,503.3V472.4M240.5,530.8V538.2M241.5,538.2V530.1M241.5,530.1V499.0M245.5,518.7V508.2M246.5,505.8V529.9M248.5,533.8V500.2M249.5,493.6V539.7M251.5,496.8V547.3M254.5,516.3V525.7M256.5,521.4V490.9M257.5,490.9V543.2M260.5,543.1V502.3M261.5,502.3V532.7M262.5,532.7V502.2M266.5,511.5V549.0M268.5,523.7V491.5M274.5,506.2V472.0M276.5,472.0V466.3M276.5,466.3V516.8M277.5,516.8V518.0M277.5,518.0V458.9M278.5,458.9V461.0M279.5,470.7V491.7M280.5,491.7V522.3M284.5,503.8V514.6M285.5,506.7V476.8M286.5,499.7V493.9M287.5,517.2V549.0M289.5,486.2V549.0M290.5,522.8V512.0M291.5,512.0V519.8M292.5,519.8V505.8M292.5,505.8V497.5M293.5,497.5V498.4M294.5,520.9V497.2M295.5,511.5V514.7M296.5,514.7V518.3M297.5,518.3V520.7M297.5,520.7V475.9M299.5,513.0V431.0M300.5,431.0V526.0M300.5,526.0V418.8M301.5,418.8V425.3M302.5,452.4V517.4M303.5,517.4V444.1M304.5,491.2V480.0M305.5,480.0V498.1M308.5,505.9V509.4M310.5,510.7V492.6M311.5,520.2V535.8M314.5,498.7V496.4M316.5,517.2V483.5M316.5,483.5V482.0M318.5,527.9V505.7M319.5,527.0V544.8M321.5,545.7V549.0M323.5,547.9V533.3M324.5,549.0V546.4M324.5,546.4V508.8M326.5,483.7V518.2M326.5,518.2V481.6M328.5,528.2V522.0M330.5,511.8V493.1M331.5,493.1V523.7M331.5,523.7V505.7M333.5,500.4V486.1M336.5,523.0V505.2M336.5,505.2V521.8M338.5,536.2V549.0M339.5,492.3V485.4M340.5,485.4V549.0M341.5,549.0V531.6M344.5,502.9V500.6M350.5,549.0V491.3M353.5,513.4V410.8M355.5,486.5V501.7M357.5,466.6V468.6M358.5,475.8V424.7M360.5,409.4V375.0M361.5,375.0V441.0M362.5,441.0V471.6M362.5,471.6V423.7M364.5,410.1V445.7M364.5,445.7V449.4M365.5,496.4V477.0M367.5,473.0V403.6M367.5,403.6V461.0M369.5,423.7V499.4M370.5,374.0V379.9M371.5,487.7V491.4M372.5,491.8V453.1M373.5,385.5V379.9M374.5,379.9V402.6M375.5,402.6V453.7M375.5,453.7V462.3M376.5,462.3V490.0M377.5,407.8V428.7M378.5,428.7V425.9M380.5,504.1V471.4M381.5,471.4V432.4M382.5,432.4V423.5M382.5,423.5V470.1M384.5,468.8V448.1M385.5,452.7V433.7M386.5,433.7V468.1M387.5,497.2V539.5M388.5,538.8V521.1M390.5,505.5V428.5M391.5,428.5V417.6M392.5,417.6V491.8M393.5,491.8V499.1M394.5,455.7V527.9M395.5,527.9V492.5M398.5,418.3V484.0M400.5,424.8V491.2M401.5,454.5V461.0M404.5,505.3V477.9M404.5,477.9V483.7M405.5,483.7V512.1M407.5,502.1V389.4M408.5,389.4V535.6M410.5,428.3V532.7M411.5,505.5V496.2M412.5,496.2V401.8M413.5,401.8V455.2M413.5,455.2V433.9M414.5,433.9V491.2M417.5,407.9V490.1M419.5,511.2V499.1M419.5,499.1V398.6M422.5,483.2V532.7M424.5,532.7V499.9M424.5,499.9V503.1M426.5,441.3V433.6M427.5,513.4V542.0M428.5,542.0V461.2M429.5,461.2V522.1M429.5,522.1V549.0M432.5,519.4V458.0M432.5,458.0V544.3M434.5,463.2V484.5M436.5,503.8V461.6M439.5,506.0V511.0M439.5,511.0V534.4M444.5,439.3V524.9M446.5,549.0V468.0M447.5,468.0V504.1M448.5,470.6V549.0M449.5,549.0V493.7M450.5,493.7V521.9M451.5,459.1V446.2M452.5,446.2V519.9M453.5,483.7V476.0M454.5,476.0V493.7M455.5,460.1V461.7M460.5,478.7V502.7M462.5,496.7V447.0M462.5,447.0V496.2M463.5,496.2V509.2M463.5,509.2V480.3M466.5,485.5V470.0M469.5,439.8V520.5M471.5,500.5V489.4M471.5,489.4V519.7M473.5,509.1V466.3M473.5,466.3V494.4M474.5,494.4V426.0M475.5,426.0V503.0M476.5,526.5V549.0M478.5,432.9V537.3M478.5,537.3V497.6M479.5,497.6V503.4M479.5,503.4V425.0M481.5,540.0V536.7M482.5,536.7V482.9M484.5,423.0V456.7M484.5,456.7V440.3M485.5,440.3V450.0M486.5,450.0V514.8M486.5,514.8V539.8M487.5,539.8V507.3M488.5,507.3V519.4M488.5,519.4V431.1M491.5,480.9V485.5M493.5,488.2V521.7M497.5,416.3V506.6M502.5,416.0V446.3M503.5,470.5V404.9M505.5,427.7V501.3M506.5,501.3V461.8M506.5,461.8V478.5M510.5,382.8V474.4M512.5,454.1V439.8M515.5,470.0V468.6M515.5,468.6V443.5M516.5,443.5V420.0M519.5,483.5V499.1M520.5,499.1V477.4M522.5,418.7V497.2M523.5,498.5V490.8M524.5,486.3V458.8M527.5,496.1V450.2M529.5,440.5V509.4M532.5,509.5V549.0M533.5,527.5V446.7M534.5,446.7V541.5M536.5,518.9V487.0M539.5,423.8V425.7M540.5,419.1V456.1M541.5,456.1V497.1M543.5,491.3V437.2M544.5,437.2V514.7M546.5,502.6V452.3M549.5,417.3V498.3M550.5,498.3V511.4M551.5,474.3V448.5M551.5,448.5V406.8M552.5,406.8V413.3M553.5,456.8V518.1M554.5,518.1V392.4M557.5,456.0V504.9M558.5,504.9V501.3M559.5,475.4V509.8M560.5,509.8V400.0M563.5,408.6V535.5M564.5,535.5V541.2M564.5,541.2V474.2M568.5,408.1V500.9M569.5,411.0V465.1M570.5,465.1V500.7M572.5,383.6V479.8M574.5,508.0V505.7M575.5,505.7V475.8M581.5,513.1V486.3M582.5,486.3V347.8M587.5,430.9V460.7M588.5,460.7V458.2M589.5,458.2V337.7M597.5,343.7V427.8M599.5,323.8V464.2M600.5,459.7V436.3M600.5,436.3V329.8M602.5,446.8V379.0M603.5,379.0V448.0M603.5,448.0V474.1M606.5,396.8V443.1M608.5,446.3V472.7M610.5,410.1V440.0M611.5,440.0V491.5M614.5,436.7V479.3M615.5,479.3V538.8M616.5,513.4V468.1M617.5,468.1V503.1M618.5,506.8V536.8M619.5,536.8V489.9M620.5,524.4V430.2M621.5,430.2V480.7M621.5,480.7V484.1M622.5,484.1V523.7M625.5,497.3V455.2M629.5,420.7V431.1M630.5,431.1V477.7M631.5,506.8V537.1M632.5,468.2V436.9M633.5,436.9V514.7M633.5,514.7V543.3M634.5,543.3V420.7M634.5,420.7V429.6M635.5,429.6V414.4M638.5,541.3V527.7M640.5,401.5V517.3M643.5,437.1V529.9M644.5,529.9V447.2M645.5,506.6V503.5M648.5,489.5V519.3M652.5,473.0V483.6M652.5,483.6V486.4M653.5,486.4V494.1M654.5,494.1V474.9M655.5,507.3V472.4M657.5,382.4V484.8M659.5,443.2V519.2M659.5,519.2V513.5M661.5,420.0V437.4M664.5,539.1V544.7M665.5,544.7V513.1M667.5,464.3V505.6M667.5,505.6V359.3M669.5,362.0V515.7M670.5,515.7V386.2M671.5,472.5V403.4M672.5,493.0V473.2M674.5,449.5V518.8M675.5,370.5V512.4M678.5,411.6V423.0M679.5,423.0V424.2M679.5,424.2V408.0M680.5,463.4V450.0M681.5,450.0V380.3M686.5,461.4V435.2M687.5,454.1V506.2M689.5,490.6V473.5M690.5,473.5V457.9M690.5,457.9V421.7M691.5,421.7V509.7M693.5,513.3V416.1M695.5,414.7V515.1M698.5,418.1V419.3M698.5,419.3V495.3M699.5,495.3V436.6M700.5,436.6V490.7M700.5,490.7V399.8M701.5,399.8V526.8M704.5,443.7V483.6M705.5,483.6V498.3M707.5,497.9V526.6M710.5,500.7V472.6M711.5,397.0V450.8M712.5,450.8V457.2M714.5,520.5V477.1M715.5,477.1V425.3M717.5,508.2V423.6M718.5,423.6V537.7M719.5,405.3V433.8M720.5,433.8V427.4M721.5,488.7V504.9M722.5,504.9V459.9M723.5,459.9V449.1M723.5,449.1V502.7M724.5,502.7V518.6M726.5,492.0V386.5M727.5,528.6V531.9M729.5,537.1V546.6M730.5,546.6V370.4M731.5,370.4V441.2M733.5,509.6V481.2M734.5,481.2V441.9M735.5,525.0V457.9M736.5,457.9V431.6M737.5,431.6V537.5M737.5,537.5V549.0M739.5,549.0V393.8M740.5,393.8V439.3M743.5,490.9V368.6M744.5,411.2V463.3M745.5,463.3V392.1M745.5,392.1V500.4M746.5,500.4V459.2M747.5,459.2V500.2M750.5,495.3V500.9M751.5,500.9V473.8M752.5,399.7V498.5M753.5,498.5V417.8M754.5,417.8V516.1M755.5,516.1V391.0M757.5,392.3V429.1M757.5,429.1V416.3M758.5,416.3V429.2M759.5,490.8V472.3M763.5,450.1V460.1M767.5,439.9V548.9M770.5,456.3V487.9M772.5,518.6V522.2M773.5,488.3V441.4M776.5,531.0V533.0M777.5,533.0V541.4M780.5,509.1V549.0M783.5,500.5V514.7M785.5,476.0V446.3M786.5,448.5V531.6M787.5,529.7V517.4M791.5,478.7V538.7M793.5,547.5V512.4M793.5,512.4V518.7M794.5,518.7V490.3M796.5,521.8V471.4M798.5,511.4V476.1M801.5,494.1V515.6M803.5,445.7V471.7M804.5,516.6V514.4M807.5,514.3V494.3M811.5,492.5V487.9M812.5,545.1V517.8M814.5,538.1V530.6M814.5,530.6V536.5M816.5,536.5V537.3M816.5,537.3V549.0M817.5,531.8V549.0M819.5,544.7V521.8M820.5,521.8V522.7M820.5,522.7V523.8M824.5,538.3V531.3M825.5,534.8V535.7M827.5,535.7V549.0M829.5,536.4V545.2M830.5,545.2V526.5M831.5,549.0V526.5M832.5,526.5V549.0M889.5,542.7V549.0M917.5,527.0V538.9M919.5,537.8V541.4M921.5,543.1V549.0M924.5,539.7V536.9M925.5,537.1V542.0M927.5,549.0V542.6M928.5,545.9V547.3" fill="none" stroke="#a010f0" stroke-width="1"/>
<path d="M108.0,548.5L109,548.5L110,548.5L111,548.5L112,548.5L113,548.5L114,548.5L115,548.5L116,548.5L117,548.5L118,548.5L119,548.5L120,548.5L121,548.5L122,548.5L123,548.5L124,548.5L125,548.5L126,548.5L127,548.5L128,548.5L129,548.5L130,548.5L131,548.5L132,548.5L133,548.5L134,548.5L135,548.5L136,548.5L137,548.5L138,548.5L139,548.5L140,548.5L141,548.5L142,548.5L143,548.5L144,535.5L145,535.5L146,535.5L147,535.5L148,535.5L149,535.5L150,535.5L151,535.5L152,535.5L153,535.5L154,518.5L155,518.5L156,518.5L157,518.5L158,518.5L159,518.5L160,518.5L161,535.5L162,535.5L163,535.5L164,535.5L165,518.5L166,518.5L167,502.5L168,502.5L169,502.5L170,502.5L171,502.5L172,502.5L173,485.5L174,485.5L175,485.5L176,502.5L177,502.5L178,502.5L179,502.5L180,502.5L181,518.5L182,518.5L183,518.5L184,518.5L185,518.5L186,518.5L187,518.5L188,518.5L189,502.5L190,502.5L191,502.5L192,518.5L193,518.5L194,518.5L195,535.5L196,535.5L197,535.5L198,535.5L199,535.5L200,535.5L201,535.5L202,535.5L203,535.5L204,535.5L205,535.5L206,535.5L207,535.5L208,535.5L209,535.5L210,535.5L211,535.5L212,518.5L213,518.5L214,518.5L215,518.5L216,518.5L217,518.5L218,518.5L219,502.5L220,502.5L221,502.5L222,502.5L223,502.5L224,502.5L225,502.5L226,502.5L227,502.5L228,502.5L229,502.5L230,502.5L231,502.5L232,502.5L233,502.5L234,502.5L235,518.5L236,518.5L237,518.5L238,535.5L239,535.5L240,535.5L241,535.5L242,535.5L243,535.5L244,535.5L245,518.5L246,518.5L247,518.5L248,535.5L249,535.5L250,535.5L251,535.5L252,535.5L253,535.5L254,535.5L255,535.5L256,535.5L257,535.5L258,535.5L259,548.5L260,548.5L261,548.5L262,548.5L263,548.5L264,548.5L265,548.5L266,548.5L267,548.5L268,548.5L269,548.5L270,535.5L271,535.5L272,535.5L273,535.5L274,518.5L275,518.5L276,502.5L277,502.5L278,502.5L279,502.5L280,502.5L281,502.5L282,502.5L283,518.5L284,535.5L285,535.5L286,548.5L287,548.5L288,548.5L289,535.5L290,535.5L291,518.5L292,518.5L293,518.5L294,518.5L295,535.5L296,535.5L297,535.5L298,535.5L299,518.5L300,518.5L301,518.5L302,502.5L303,502.5L304,502.5L305,518.5L306,518.5L307,518.5L308,518.5L309,535.5L310,535.5L311,535.5L312,535.5L313,535.5L314,535.5L315,535.5L316,535.5L317,548.5L318,548.5L319,548.5L320,548.5L321,548.5L322,548.5L323,548.5L324,535.5L325,535.5L326,535.5L327,535.5L328,535.5L329,535.5L330,535.5L331,535.5L332,535.5L333,548.5L334,548.5L335,548.5L336,548.5L337,548.5L338,548.5L339,548.5L340,548.5L341,548.5L342,548.5L343,548.5L344,548.5L345,548.5L346,548.5L347,548.5L348,548.5L349,548.5L350,535.5L351,535.5L352,518.5L353,518.5L354,502.5L355,485.5L356,485.5L357,485.5L358,485.5L359,485.5L360,485.5L361,485.5L362,469.5L363,469.5L364,469.5L365,485.5L366,485.5L367,485.5L368,485.5L369,485.5L370,485.5L371,485.5L372,485.5L373,485.5L374,485.5L375,485.5L376,485.5L377,485.5L378,485.5L379,485.5L380,502.5L381,502.5L382,502.5L383,502.5L384,518.5L385,518.5L386,518.5L387,518.5L388,518.5L389,518.5L390,518.5L391,518.5L392,502.5L393,502.5L394,502.5L395,502.5L396,502.5L397,502.5L398,502.5L399,502.5L400,502.5L401,502.5L402,502.5L403,502.5L404,502.5L405,502.5L406,502.5L407,502.5L408,518.5L409,518.5L410,518.5L411,502.5L412,502.5L413,502.5L414,502.5L415,485.5L416,485.5L417,485.5L418,485.5L419,485.5L420,485.5L421,502.5L422,502.5L423,502.5L424,518.5L425,518.5L426,518.5L427,535.5L428,535.5L429,535.5L430,518.5L431,518.5L432,518.5L433,518.5L434,535.5L435,535.5L436,518.5L437,518.5L438,502.5L439,502.5L440,518.5L441,518.5L442,518.5L443,518.5L444,518.5L445,535.5L446,535.5L447,535.5L448,535.5L449,535.5L450,535.5L451,518.5L452,518.5L453,518.5L454,518.5L455,518.5L456,518.5L457,518.5L458,502.5L459,502.5L460,502.5L461,502.5L462,485.5L463,485.5L464,485.5L465,485.5L466,485.5L467,502.5L468,502.5L469,502.5L470,518.5L471,518.5L472,518.5L473,518.5L474,535.5L475,535.5L476,535.5L477,535.5L478,535.5L479,518.5L480,518.5L481,518.5L482,518.5L483,518.5L484,518.5L485,518.5L486,518.5L487,518.5L488,518.5L489,518.5L490,518.5L491,518.5L492,518.5L493,518.5L494,518.5L495,518.5L496,535.5L497,535.5L498,535.5L499,518.5L500,518.5L501,502.5L502,502.5L503,502.5L504,485.5L505,485.5L506,485.5L507,469.5L508,469.5L509,469.5L510,469.5L511,469.5L512,485.5L513,485.5L514,485.5L515,485.5L516,485.5L517,485.5L518,485.5L519,485.5L520,485.5L521,485.5L522,502.5L523,502.5L524,502.5L525,518.5L526,518.5L527,518.5L528,518.5L529,535.5L530,535.5L531,535.5L532,535.5L533,518.5L534,518.5L535,518.5L536,518.5L537,518.5L538,518.5L539,518.5L540,518.5L541,518.5L542,518.5L543,518.5L544,518.5L545,518.5L546,502.5L547,502.5L548,502.5L549,502.5L550,485.5L551,485.5L552,485.5L553,485.5L554,502.5L555,502.5L556,502.5L557,502.5L558,502.5L559,518.5L560,518.5L561,518.5L562,518.5L563,518.5L564,518.5L565,518.5L566,518.5L567,518.5L568,502.5L569,502.5L570,485.5L571,485.5L572,485.5L573,485.5L574,502.5L575,485.5L576,485.5L577,485.5L578,485.5L579,485.5L580,502.5L581,485.5L582,485.5L583,485.5L584,485.5L585,485.5L586,485.5L587,485.5L588,469.5L589,469.5L590,469.5L591,469.5L592,452.5L593,452.5L594,452.5L595,452.5L596,452.5L597,452.5L598,452.5L599,452.5L600,452.5L601,452.5L602,452.5L603,452.5L604,452.5L605,452.5L606,452.5L607,469.5L608,469.5L609,485.5L610,485.5L611,502.5L612,502.5L613,518.5L614,518.5L615,518.5L616,518.5L617,502.5L618,518.5L619,518.5L620,518.5L621,518.5L622,502.5L623,502.5L624,502.5L625,502.5L626,518.5L627,518.5L628,518.5L629,518.5L630,535.5L631,535.5L632,535.5L633,535.5L634,535.5L635,535.5L636,535.5L637,535.5L638,535.5L639,535.5L640,535.5L641,535.5L642,518.5L643,518.5L644,518.5L645,502.5L646,502.5L647,502.5L648,502.5L649,518.5L650,518.5L651,518.5L652,518.5L653,502.5L654,502.5L655,502.5L656,502.5L657,502.5L658,518.5L659,518.5L660,518.5L661,518.5L662,535.5L663,535.5L664,535.5L665,535.5L666,535.5L667,535.5L668,535.5L669,518.5L670,518.5L671,502.5L672,502.5L673,502.5L674,502.5L675,502.5L676,485.5L677,485.5L678,485.5L679,485.5L680,485.5L681,485.5L682,485.5L683,485.5L684,485.5L685,485.5L686,485.5L687,485.5L688,485.5L689,485.5L690,485.5L691,485.5L692,502.5L693,502.5L694,518.5L695,518.5L696,518.5L697,518.5L698,518.5L699,518.5L700,518.5L701,518.5L702,518.5L703,502.5L704,502.5L705,502.5L706,502.5L707,518.5L708,518.5L709,518.5L710,518.5L711,518.5L712,518.5L713,518.5L714,518.5L715,518.5L716,518.5L717,518.5L718,518.5L719,518.5L720,518.5L721,518.5L722,518.5L723,518.5L724,518.5L725,518.5L726,518.5L727,518.5L728,518.5L729,535.5L730,535.5L731,535.5L732,535.5L733,535.5L734,548.5L735,548.5L736,548.5L737,548.5L738,535.5L739,535.5L740,518.5L741,518.5L742,502.5L743,502.5L744,502.5L745,485.5L746,485.5L747,485.5L748,485.5L749,485.5L750,485.5L751,502.5L752,502.5L753,502.5L754,502.5L755,502.5L756,502.5L757,502.5L758,502.5L759,502.5L760,502.5L761,502.5L762,502.5L763,518.5L764,518.5L765,518.5L766,535.5L767,535.5L768,535.5L769,548.5L770,548.5L771,548.5L772,535.5L773,535.5L774,535.5L775,535.5L776,535.5L777,535.5L778,535.5L779,535.5L780,535.5L781,535.5L782,535.5L783,518.5L784,518.5L785,518.5L786,518.5L787,518.5L788,535.5L789,535.5L790,535.5L791,535.5L792,535.5L793,535.5L794,535.5L795,535.5L796,535.5L797,535.5L798,518.5L799,518.5L800,518.5L801,518.5L802,502.5L803,502.5L804,502.5L805,485.5L806,485.5L807,485.5L808,485.5L809,485.5L810,502.5L811,502.5L812,518.5L813,535.5L814,535.5L815,548.5L816,548.5L817,548.5L818,548.5L819,548.5L820,548.5L821,548.5L822,548.5L823,548.5L824,548.5L825,548.5L826,548.5L827,548.5L828,548.5L829,548.5L830,548.5L831,548.5L832,548.5L833,548.5L834,548.5L835,548.5L836,548.5L837,548.5L838,548.5L839,548.5L840,548.5L841,548.5L842,548.5L843,548.5L844,548.5L845,548.5L846,548.5L847,548.5L848,548.5L849,548.5L850,548.5L851,548.5L852,548.5L853,548.5L854,548.5L855,548.5L856,548.5L857,548.5L858,548.5L859,548.5L860,548.5L861,548.5L862,548.5L863,548.5L864,548.5L865,548.5L866,548.5L867,548.5L868,548.5L869,548.5L870,548.5L871,548.5L872,548.5L873,548.5L874,548.5L875,548.5L876,548.5L877,548.5L878,548.5L879,548.5L880,548.5L881,548.5L882,548.5L883,548.5L884,548.5L885,548.5L886,548.5L887,548.5L888,548.5L889,548.5L890,548.5L891,548.5L892,548.5L893,548.5L894,548.5L895,548.5L896,548.5L897,548.5L898,548.5L899,548.5L900,548.5L901,548.5L902,548.5L903,548.5L904,548.5L905,548.5L906,548.5L907,548.5L908,548.5L909,548.5L910,548.5L911,548.5L912,548.5L913,548.5L914,548.5L915,548.5L916,548.5L917,548.5L918,548.5L919,548.5L920,548.5L921,548.5L922,548.5L923,548.5L924,548.5L925,548.5L926,548.5L927,548.5L928,548.5L929,548.5L930,548.5L931,548.5L932,548.5L933,548.5L934,548.5L935,548.5L936,548.5L937,548.5L938,548.5L939,548.5L940,548.5L941,548.5L942,548.5L943,548.5L944,548.5" fill="none" stroke="#101010" stroke-width="1"/>
<polyline points="108.0,549.0 289.0,549.0 295.0,528.0 301.0,503.0 307.0,486.0 313.0,478.0 404.0,477.0 410.0,475.0 418.0,470.0 426.0,465.0 437.0,458.5 445.0,456.5 944.0,456.5" fill="none" stroke="#20c8f0" stroke-width="2" stroke-linejoin="round"/>
<line x1="108" y1="549" x2="944" y2="549" stroke="#30c0e0" stroke-width="2"/>
<text x="7.00" y="571" font-size="9.48" fill="#202020" stroke="#202020" class="h" transform="matrix(0.8333,0,0,1,1.167,0)">16:09</text>
<path d="M29,570 a3.5,3 0 0 1 7,0 z" fill="#f8e020"/>
<text x="274.00" y="571" font-size="9.48" fill="#202020" stroke="#202020" class="h" transform="matrix(0.8333,0,0,1,45.667,0)">05:27</text>
<circle cx="298.5" cy="568" r="2.6" fill="#f8e020"/><circle cx="298.5" cy="568" r="4" fill="none" stroke="#f8f080" stroke-width="1.2" stroke-dasharray="1 1"/>
<line x1="298.5" y1="549" x2="298.5" y2="555" stroke="#f0d000" stroke-width="1.5"/>
<text x="395.00" y="571" font-size="9.48" fill="#202020" stroke="#202020" class="h" transform="matrix(0.8333,0,0,1,65.833,0)">08:07</text>
<path d="M388,565 l3,3 l-1.5,3 z" fill="#e8c000"/><circle cx="392" cy="570" r="1.2" fill="#303080"/>
<line x1="390.5" y1="547" x2="390.5" y2="557" stroke="#404040" stroke-width="1"/>
<text x="838.00" y="571" font-size="9.48" fill="#202020" stroke="#202020" class="h" transform="matrix(0.8333,0,0,1,139.667,0)">21:36</text>
<circle cx="862" cy="568" r="2.3" fill="none" stroke="#f0e040" stroke-width="1"/>
<line x1="861.5" y1="549" x2="861.5" y2="556" stroke="#f0d000" stroke-width="1.5"/>
<text x="899.00" y="571" font-size="9.48" fill="#202020" stroke="#202020" class="h" transform="matrix(0.8333,0,0,1,149.833,0)">22:34</text>
<path d="M893,573 l2,-6 l2,6 z" fill="#e8c000"/><rect x="891.5" y="564.5" width="4" height="4" fill="none" stroke="#6060c0" stroke-width="0.8" stroke-dasharray="1 1"/>
<line x1="894.5" y1="549" x2="894.5" y2="557" stroke="#404040" stroke-width="1"/>
<rect x="0" y="573" width="1024" height="27" fill="#00ff00"/>
<rect x="0" y="600" width="1024" height="2" fill="#d8d8d8"/>
<rect x="0" y="602" width="1024" height="64" fill="#ff8000"/>
<rect x="62" y="573" width="1.6" height="27" fill="#dcdcdc"/>
<rect x="146" y="573" width="1.6" height="27" fill="#dcdcdc"/>
<rect x="230" y="573" width="1.6" height="27" fill="#dcdcdc"/>
<rect x="315" y="573" width="1.6" height="27" fill="#dcdcdc"/>
<rect x="399" y="573" width="1.6" height="27" fill="#dcdcdc"/>
<rect x="62" y="602" width="1.6" height="64" fill="#e8dcd0"/>
<rect x="146" y="602" width="1.6" height="64" fill="#e8dcd0"/>
<rect x="230" y="602" width="1.6" height="64" fill="#e8dcd0"/>
<rect x="315" y="602" width="1.6" height="64" fill="#e8dcd0"/>
<rect x="399" y="602" width="1.6" height="64" fill="#e8dcd0"/>
<rect x="483" y="602" width="1.6" height="64" fill="#e8dcd0"/>
<rect x="568" y="602" width="1.6" height="64" fill="#e8dcd0"/>
<rect x="652" y="602" width="1.6" height="64" fill="#e8dcd0"/>
<text x="6.00" y="584" font-size="9.48" fill="#103010" stroke="#103010" class="t" transform="matrix(0.8333,0,0,1,1.000,0)">Wetterdaten</text>
<text x="6.00" y="596" font-size="9.48" fill="#103010" stroke="#103010" class="t" transform="matrix(0.8333,0,0,1,1.000,0)">14.07.14 23:59</text>
<text x="67.00" y="584" font-size="9.42" fill="#103010" stroke="#103010" class="t" transform="matrix(0.8333,0,0,1,11.167,0)">Temp. I.</text>
<text x="142.00" y="584" font-size="9.42" fill="#103010" stroke="#103010" class="t" transform="matrix(0.8333,0,0,1,23.667,0)" text-anchor="end">24.6 °C</text>
<text x="67.00" y="596" font-size="9.42" fill="#103010" stroke="#103010" class="t" transform="matrix(0.8333,0,0,1,11.167,0)">Feuchte I.</text>
<text x="142.00" y="596" font-size="9.42" fill="#103010" stroke="#103010" class="t" transform="matrix(0.8333,0,0,1,23.667,0)" text-anchor="end">52 %</text>
<text x="150.00" y="584" font-size="9.42" fill="#103010" stroke="#103010" class="t" transform="matrix(0.8333,0,0,1,25.000,0)">Temp. 2m</text>
<text x="225.00" y="584" font-size="9.42" fill="#103010" stroke="#103010" class="t" transform="matrix(0.8333,0,0,1,37.500,0)" text-anchor="end">12.6 °C</text>
<text x="150.00" y="596" font-size="9.42" fill="#103010" stroke="#103010" class="t" transform="matrix(0.8333,0,0,1,25.000,0)">Feuchte A.</text>
<text x="225.00" y="596" font-size="9.42" fill="#103010" stroke="#103010" class="t" transform="matrix(0.8333,0,0,1,37.500,0)" text-anchor="end">96 %</text>
<text x="236.00" y="584" font-size="9.42" fill="#103010" stroke="#103010" class="t" transform="matrix(0.8333,0,0,1,39.333,0)">Luftdruck</text>
<text x="310.00" y="584" font-size="9.42" fill="#103010" stroke="#103010" class="t" transform="matrix(0.8333,0,0,1,51.667,0)" text-anchor="end">1016.8 hPa</text>
<text x="236.00" y="596" font-size="9.42" fill="#103010" stroke="#103010" class="t" transform="matrix(0.8333,0,0,1,39.333,0)">Regen</text>
<text x="310.00" y="596" font-size="9.42" fill="#103010" stroke="#103010" class="t" transform="matrix(0.8333,0,0,1,51.667,0)" text-anchor="end">0.0 l/m²</text>
<text x="319.00" y="584" font-size="9.42" fill="#103010" stroke="#103010" class="t" transform="matrix(0.8333,0,0,1,53.167,0)">Wind</text>
<text x="395.00" y="584" font-size="9.42" fill="#103010" stroke="#103010" class="t" transform="matrix(0.8333,0,0,1,65.833,0)" text-anchor="end">0.0 km/h</text>
<text x="319.00" y="596" font-size="9.42" fill="#103010" stroke="#103010" class="t" transform="matrix(0.8333,0,0,1,53.167,0)">Richtung</text>
<text x="394.00" y="596" font-size="9.42" fill="#103010" stroke="#103010" class="t" transform="matrix(0.8333,0,0,1,65.667,0)" text-anchor="end">O</text>
<defs><pattern id="dith" width="2" height="2" patternUnits="userSpaceOnUse"><rect width="2" height="2" fill="#3c96f0"/><rect width="1" height="1" fill="#70a090"/><rect x="1" y="1" width="1" height="1" fill="#5080d0"/></pattern></defs>
<rect x="402" y="575" width="24" height="24" fill="url(#dith)"/>
<path d="M402.5,575.5 H426 M402.5,575.5 V599" stroke="#303040" stroke-width="1" stroke-dasharray="1 1"/>
<polygon points="414,580 416,583.5 420,582 418.5,586 422,588 418,590 419,594 415,592.5 413,596 411.5,592 408,593 409.5,589.5 406,587 410,585.5 409,581.5 412.5,583" fill="#f0e030"/>
<circle cx="414" cy="588" r="3.2" fill="#f8e818"/>
<text x="787.00" y="584" font-size="9.42" fill="#103010" stroke="#103010" class="t" transform="matrix(0.8333,0,0,1,131.167,0)">WR 81°</text>
<text x="787.00" y="596" font-size="9.42" fill="#103010" stroke="#103010" class="t" transform="matrix(0.8333,0,0,1,131.167,0)">WC 12.6°C</text>
<text x="836.00" y="584" font-size="9.42" fill="#103010" stroke="#103010" class="t" transform="matrix(0.8333,0,0,1,139.333,0)">Solar</text>
<text x="836.00" y="596" font-size="9.42" fill="#103010" stroke="#103010" class="t" transform="matrix(0.8333,0,0,1,139.333,0)">ET</text>
<text x="919.00" y="584" font-size="9.42" fill="#103010" stroke="#103010" class="t" transform="matrix(0.8333,0,0,1,153.167,0)" text-anchor="end">0 W/m²</text>
<text x="912.00" y="596" font-size="9.42" fill="#103010" stroke="#103010" class="t" transform="matrix(0.8333,0,0,1,152.000,0)" text-anchor="end">0.000 mm</text>
<text x="937.00" y="584" font-size="9.42" fill="#103010" stroke="#103010" class="t" transform="matrix(0.8333,0,0,1,156.167,0)">UV</text>
<text x="937.00" y="596" font-size="9.42" fill="#103010" stroke="#103010" class="t" transform="matrix(0.8333,0,0,1,156.167,0)">Taupunkt</text>
<text x="1020.00" y="584" font-size="9.42" fill="#103010" stroke="#103010" class="t" transform="matrix(0.8333,0,0,1,170.000,0)" text-anchor="end">0.0 UV-I</text>
<text x="1013.00" y="596" font-size="9.42" fill="#103010" stroke="#103010" class="t" transform="matrix(0.8333,0,0,1,168.833,0)" text-anchor="end">12.0 °C</text>
<text x="6.00" y="614.5" font-size="8.30" fill="#1a1a4a" stroke="#1a1a4a" class="t" transform="matrix(1.0000,0,0,1,0.000,0)" font-weight="bold">Sensor</text>
<text x="6.00" y="625.8" font-size="8.30" fill="#1a1a4a" stroke="#1a1a4a" class="t" transform="matrix(1.0000,0,0,1,0.000,0)" font-weight="bold">MinWert</text>
<text x="6.00" y="637.2" font-size="8.30" fill="#1a1a4a" stroke="#1a1a4a" class="t" transform="matrix(1.0000,0,0,1,0.000,0)" font-weight="bold">MaxWert</text>
<text x="6.00" y="648.6" font-size="8.30" fill="#1a1a4a" stroke="#1a1a4a" class="t" transform="matrix(1.0000,0,0,1,0.000,0)" font-weight="bold">Durchschnitt</text>
<text x="6.00" y="659.8" font-size="8.30" fill="#1a1a4a" stroke="#1a1a4a" class="t" transform="matrix(1.0000,0,0,1,0.000,0)" font-weight="bold">14.07. 23:59</text>
<text x="67.00" y="614.5" font-size="8.30" fill="#1a1a4a" stroke="#1a1a4a" class="t" transform="matrix(1.0000,0,0,1,0.000,0)" font-weight="bold">Temp. 2m</text>
<text x="142.50" y="614.5" font-size="8.30" fill="#1a1a4a" stroke="#1a1a4a" class="t" transform="matrix(1.0000,0,0,1,0.000,0)" text-anchor="end" font-weight="bold">°C</text>
<text x="72.00" y="625.8" font-size="9.42" fill="#2a2018" stroke="#2a2018" class="t" transform="matrix(0.8333,0,0,1,12.000,0)">23:54</text>
<text x="142.50" y="625.8" font-size="9.42" fill="#2a2018" stroke="#2a2018" class="t" transform="matrix(0.8333,0,0,1,23.750,0)" text-anchor="end">12.6</text>
<text x="72.00" y="637.2" font-size="9.42" fill="#2a2018" stroke="#2a2018" class="t" transform="matrix(0.8333,0,0,1,12.000,0)">15:14</text>
<text x="142.50" y="637.2" font-size="9.42" fill="#2a2018" stroke="#2a2018" class="t" transform="matrix(0.8333,0,0,1,23.750,0)" text-anchor="end">18.8</text>
<text x="142.50" y="648.6" font-size="9.42" fill="#2a2018" stroke="#2a2018" class="t" transform="matrix(0.8333,0,0,1,23.750,0)" text-anchor="end">16.01</text>
<text x="70.00" y="659.8" font-size="9.42" fill="#2a2018" stroke="#2a2018" class="t" transform="matrix(0.8333,0,0,1,11.667,0)">F: 96 %</text>
<text x="142.50" y="659.8" font-size="8.30" fill="#1a1a4a" stroke="#1a1a4a" class="t" transform="matrix(1.0000,0,0,1,0.000,0)" text-anchor="end" font-weight="bold">12.6</text>
<text x="152.00" y="614.5" font-size="8.30" fill="#1a1a4a" stroke="#1a1a4a" class="t" transform="matrix(1.0000,0,0,1,0.000,0)" font-weight="bold">Temp. 5cm</text>
<text x="226.50" y="614.5" font-size="8.30" fill="#1a1a4a" stroke="#1a1a4a" class="t" transform="matrix(1.0000,0,0,1,0.000,0)" text-anchor="end" font-weight="bold">°C</text>
<text x="157.00" y="625.8" font-size="9.42" fill="#2a2018" stroke="#2a2018" class="t" transform="matrix(0.8333,0,0,1,26.167,0)">23:40</text>
<text x="226.50" y="625.8" font-size="9.42" fill="#2a2018" stroke="#2a2018" class="t" transform="matrix(0.8333,0,0,1,37.750,0)" text-anchor="end">11.1</text>
<text x="157.00" y="637.2" font-size="9.42" fill="#2a2018" stroke="#2a2018" class="t" transform="matrix(0.8333,0,0,1,26.167,0)">11:58</text>
<text x="226.50" y="637.2" font-size="9.42" fill="#2a2018" stroke="#2a2018" class="t" transform="matrix(0.8333,0,0,1,37.750,0)" text-anchor="end">23.3</text>
<text x="226.50" y="648.6" font-size="9.42" fill="#2a2018" stroke="#2a2018" class="t" transform="matrix(0.8333,0,0,1,37.750,0)" text-anchor="end">16.43</text>
<text x="226.50" y="659.8" font-size="8.30" fill="#1a1a4a" stroke="#1a1a4a" class="t" transform="matrix(1.0000,0,0,1,0.000,0)" text-anchor="end" font-weight="bold">11.1</text>
<text x="236.00" y="614.5" font-size="8.30" fill="#1a1a4a" stroke="#1a1a4a" class="t" transform="matrix(1.0000,0,0,1,0.000,0)" font-weight="bold">Feuchte A.</text>
<text x="311.00" y="614.5" font-size="8.30" fill="#1a1a4a" stroke="#1a1a4a" class="t" transform="matrix(1.0000,0,0,1,0.000,0)" text-anchor="end" font-weight="bold">%</text>
<text x="240.00" y="625.8" font-size="9.42" fill="#2a2018" stroke="#2a2018" class="t" transform="matrix(0.8333,0,0,1,40.000,0)">15:21</text>
<text x="311.00" y="625.8" font-size="9.42" fill="#2a2018" stroke="#2a2018" class="t" transform="matrix(0.8333,0,0,1,51.833,0)" text-anchor="end">82</text>
<text x="240.00" y="637.2" font-size="9.42" fill="#2a2018" stroke="#2a2018" class="t" transform="matrix(0.8333,0,0,1,40.000,0)">06:19</text>
<text x="311.00" y="637.2" font-size="9.42" fill="#2a2018" stroke="#2a2018" class="t" transform="matrix(0.8333,0,0,1,51.833,0)" text-anchor="end">98</text>
<text x="311.00" y="648.6" font-size="9.42" fill="#2a2018" stroke="#2a2018" class="t" transform="matrix(0.8333,0,0,1,51.833,0)" text-anchor="end">91</text>
<text x="239.00" y="659.8" font-size="9.42" fill="#2a2018" stroke="#2a2018" class="t" transform="matrix(0.8333,0,0,1,39.833,0)">10.63 g/m³</text>
<text x="311.00" y="659.8" font-size="8.30" fill="#1a1a4a" stroke="#1a1a4a" class="t" transform="matrix(1.0000,0,0,1,0.000,0)" text-anchor="end" font-weight="bold">96</text>
<text x="321.00" y="614.5" font-size="8.30" fill="#1a1a4a" stroke="#1a1a4a" class="t" transform="matrix(1.0000,0,0,1,0.000,0)" font-weight="bold">Regen</text>
<text x="395.50" y="614.5" font-size="8.30" fill="#1a1a4a" stroke="#1a1a4a" class="t" transform="matrix(1.0000,0,0,1,0.000,0)" text-anchor="end" font-weight="bold">l/m²</text>
<text x="325.00" y="637.2" font-size="9.42" fill="#2a2018" stroke="#2a2018" class="t" transform="matrix(0.8333,0,0,1,54.167,0)">05:12</text>
<text x="395.50" y="637.2" font-size="9.42" fill="#2a2018" stroke="#2a2018" class="t" transform="matrix(0.8333,0,0,1,65.917,0)" text-anchor="end">0.4</text>
<text x="321.00" y="648.6" font-size="9.42" fill="#2a2018" stroke="#2a2018" class="t" transform="matrix(0.8333,0,0,1,53.500,0)">Gesamt:</text>
<text x="395.50" y="648.6" font-size="9.42" fill="#2a2018" stroke="#2a2018" class="t" transform="matrix(0.8333,0,0,1,65.917,0)" text-anchor="end">3.6</text>
<text x="323.00" y="659.8" font-size="9.42" fill="#2a2018" stroke="#2a2018" class="t" transform="matrix(0.8333,0,0,1,53.833,0)">3.6 l/m²</text>
<text x="395.50" y="659.8" font-size="8.30" fill="#1a1a4a" stroke="#1a1a4a" class="t" transform="matrix(1.0000,0,0,1,0.000,0)" text-anchor="end" font-weight="bold">0.0</text>
<text x="405.00" y="614.5" font-size="8.30" fill="#1a1a4a" stroke="#1a1a4a" class="t" transform="matrix(1.0000,0,0,1,0.000,0)" font-weight="bold">Luftdruck</text>
<text x="479.50" y="614.5" font-size="8.30" fill="#1a1a4a" stroke="#1a1a4a" class="t" transform="matrix(1.0000,0,0,1,0.000,0)" text-anchor="end" font-weight="bold">hPa</text>
<text x="409.00" y="625.8" font-size="9.42" fill="#2a2018" stroke="#2a2018" class="t" transform="matrix(0.8333,0,0,1,68.167,0)">00:17</text>
<text x="479.50" y="625.8" font-size="9.42" fill="#2a2018" stroke="#2a2018" class="t" transform="matrix(0.8333,0,0,1,79.917,0)" text-anchor="end">1006.5</text>
<text x="409.00" y="637.2" font-size="9.42" fill="#2a2018" stroke="#2a2018" class="t" transform="matrix(0.8333,0,0,1,68.167,0)">23:59</text>
<text x="479.50" y="637.2" font-size="9.42" fill="#2a2018" stroke="#2a2018" class="t" transform="matrix(0.8333,0,0,1,79.917,0)" text-anchor="end">1016.8</text>
<text x="405.00" y="648.6" font-size="9.42" fill="#2a2018" stroke="#2a2018" class="t" transform="matrix(0.8333,0,0,1,67.500,0)">^1.0hPa/h</text>
<text x="479.50" y="648.6" font-size="9.42" fill="#2a2018" stroke="#2a2018" class="t" transform="matrix(0.8333,0,0,1,79.917,0)" text-anchor="end">1011.1</text>
<text x="405.00" y="659.8" font-size="9.42" fill="#2a2018" stroke="#2a2018" class="t" transform="matrix(0.8333,0,0,1,67.500,0)">sonnig</text>
<text x="479.50" y="659.8" font-size="8.30" fill="#1a1a4a" stroke="#1a1a4a" class="t" transform="matrix(1.0000,0,0,1,0.000,0)" text-anchor="end" font-weight="bold">1016.8</text>
<text x="489.00" y="614.5" font-size="8.30" fill="#1a1a4a" stroke="#1a1a4a" class="t" transform="matrix(1.0000,0,0,1,0.000,0)" font-weight="bold">Sonnenschein</text>
<text x="564.50" y="614.5" font-size="8.30" fill="#1a1a4a" stroke="#1a1a4a" class="t" transform="matrix(1.0000,0,0,1,0.000,0)" text-anchor="end" font-weight="bold">min</text>
<text x="493.00" y="637.2" font-size="9.42" fill="#2a2018" stroke="#2a2018" class="t" transform="matrix(0.8333,0,0,1,82.167,0)">11:55</text>
<text x="564.50" y="637.2" font-size="9.42" fill="#2a2018" stroke="#2a2018" class="t" transform="matrix(0.8333,0,0,1,94.083,0)" text-anchor="end">1</text>
<text x="489.00" y="648.6" font-size="9.42" fill="#2a2018" stroke="#2a2018" class="t" transform="matrix(0.8333,0,0,1,81.500,0)">32 min.</text>
<text x="564.50" y="648.6" font-size="9.42" fill="#2a2018" stroke="#2a2018" class="t" transform="matrix(0.8333,0,0,1,94.083,0)" text-anchor="end">0</text>
<text x="564.50" y="659.8" font-size="8.30" fill="#1a1a4a" stroke="#1a1a4a" class="t" transform="matrix(1.0000,0,0,1,0.000,0)" text-anchor="end" font-weight="bold">0</text>
<text x="574.00" y="614.5" font-size="8.30" fill="#1a1a4a" stroke="#1a1a4a" class="t" transform="matrix(1.0000,0,0,1,0.000,0)" font-weight="bold">Windböen</text>
<text x="648.00" y="614.5" font-size="8.30" fill="#1a1a4a" stroke="#1a1a4a" class="t" transform="matrix(1.0000,0,0,1,0.000,0)" text-anchor="end" font-weight="bold">km/h</text>
<text x="574.00" y="625.8" font-size="9.42" fill="#2a2018" stroke="#2a2018" class="t" transform="matrix(0.8333,0,0,1,95.667,0)">Ø 10 min.</text>
<text x="648.00" y="625.8" font-size="9.42" fill="#2a2018" stroke="#2a2018" class="t" transform="matrix(0.8333,0,0,1,108.000,0)" text-anchor="end">0.1</text>
<text x="578.00" y="637.2" font-size="9.42" fill="#2a2018" stroke="#2a2018" class="t" transform="matrix(0.8333,0,0,1,96.333,0)">14:05</text>
<text x="648.00" y="637.2" font-size="9.42" fill="#2a2018" stroke="#2a2018" class="t" transform="matrix(0.8333,0,0,1,108.000,0)" text-anchor="end">SW 22.7</text>
<text x="578.00" y="648.6" font-size="9.42" fill="#2a2018" stroke="#2a2018" class="t" transform="matrix(0.8333,0,0,1,96.333,0)">138.0 km</text>
<text x="648.00" y="648.6" font-size="9.42" fill="#2a2018" stroke="#2a2018" class="t" transform="matrix(0.8333,0,0,1,108.000,0)" text-anchor="end">5.8</text>
<text x="578.00" y="659.8" font-size="9.42" fill="#2a2018" stroke="#2a2018" class="t" transform="matrix(0.8333,0,0,1,96.333,0)">0 Bft N</text>
<text x="648.00" y="659.8" font-size="8.30" fill="#1a1a4a" stroke="#1a1a4a" class="t" transform="matrix(1.0000,0,0,1,0.000,0)" text-anchor="end" font-weight="bold">0.0</text>
<text x="658.00" y="614.5" font-size="8.30" fill="#1a1a4a" stroke="#1a1a4a" class="t" transform="matrix(1.0000,0,0,1,0.000,0)" font-weight="bold">Wind</text>
<text x="731.00" y="614.5" font-size="8.30" fill="#1a1a4a" stroke="#1a1a4a" class="t" transform="matrix(1.0000,0,0,1,0.000,0)" text-anchor="end" font-weight="bold">km/h</text>
<text x="658.00" y="625.8" font-size="9.42" fill="#2a2018" stroke="#2a2018" class="t" transform="matrix(0.8333,0,0,1,109.667,0)">Ø 10 min.</text>
<text x="731.00" y="625.8" font-size="9.42" fill="#2a2018" stroke="#2a2018" class="t" transform="matrix(0.8333,0,0,1,121.833,0)" text-anchor="end">0.0</text>
<text x="662.00" y="637.2" font-size="9.42" fill="#2a2018" stroke="#2a2018" class="t" transform="matrix(0.8333,0,0,1,110.333,0)">13:57</text>
<text x="731.00" y="637.2" font-size="9.42" fill="#2a2018" stroke="#2a2018" class="t" transform="matrix(0.8333,0,0,1,121.833,0)" text-anchor="end">SW 9.7</text>
<text x="662.00" y="648.6" font-size="9.42" fill="#2a2018" stroke="#2a2018" class="t" transform="matrix(0.8333,0,0,1,110.333,0)">138.0 km</text>
<text x="731.00" y="648.6" font-size="9.42" fill="#2a2018" stroke="#2a2018" class="t" transform="matrix(0.8333,0,0,1,121.833,0)" text-anchor="end">2.8</text>
<text x="662.00" y="659.8" font-size="9.42" fill="#2a2018" stroke="#2a2018" class="t" transform="matrix(0.8333,0,0,1,110.333,0)">0 Bft O</text>
<text x="731.00" y="659.8" font-size="8.30" fill="#1a1a4a" stroke="#1a1a4a" class="t" transform="matrix(1.0000,0,0,1,0.000,0)" text-anchor="end" font-weight="bold">0.0</text>
<rect x="448" y="651" width="7" height="10" fill="#e8eef8"/>
<path d="M451.5,652 L448.5,656 H450.5 V660.5 H452.5 V656 H454.5 Z" fill="#1a1a4a"/>
</svg>
</body></html>
